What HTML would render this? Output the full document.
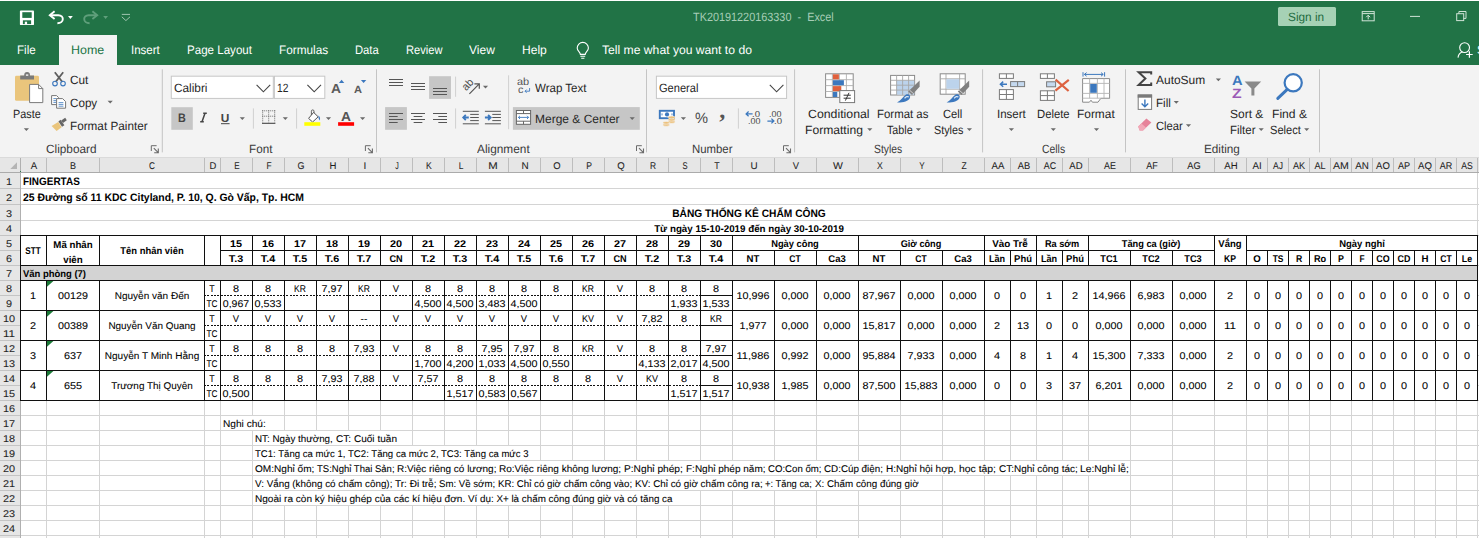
<!DOCTYPE html>
<html lang="vi"><head><meta charset="utf-8"><title>TK20191220163330 - Excel</title><style>
html,body{margin:0;padding:0;background:#fff;}
#app{position:relative;width:1479px;height:538px;overflow:hidden;background:#fff;font-family:"Liberation Sans", sans-serif;}
#app div,#app span,#app svg{position:absolute;display:block;}
.t{white-space:pre;line-height:16px;height:16px;text-rendering:geometricPrecision;}
</style></head><body><div id="app">
<div style="left:0.00px;top:0.00px;width:1479.00px;height:1.00px;background:#ffffff;"></div>
<div style="left:0.00px;top:1.00px;width:1479.00px;height:63.60px;background:#217346;"></div>
<div style="left:0.00px;top:64.60px;width:1479.00px;height:92.40px;background:#f3f3f3;"></div>
<div style="left:58.80px;top:35.00px;width:58.00px;height:30.00px;background:#f3f3f3;"></div>
<svg style="left:0;top:0" width="1479" height="158" viewBox="0 0 1479 158"><rect x="19.9" y="10.6" width="14.1" height="14.5" rx="0.9" fill="#fff"/><rect x="22.3" y="12.2" width="9.4" height="5.7" fill="#217346"/><rect x="22.9" y="20.3" width="8.2" height="3.8" fill="#217346"/><rect x="24.8" y="21.7" width="2.3" height="2.6" fill="#fff"/><path d="M54.6 11.3L49.8 15.2L54.6 19.1" fill="none" stroke="#fff" stroke-width="1.9"/><path d="M50.4 15.2H58.4C61.4 15.2 62.8 17.2 62.8 19C62.8 21.4 60.6 23.2 57.4 23.2" fill="none" stroke="#fff" stroke-width="1.9"/><path d="M68.00 16.00h4.8l-2.40 3.0z" fill="#fff"/><path d="M92.4 11.3L97.2 15.2L92.4 19.1" fill="none" stroke="#5f9f7b" stroke-width="1.9"/><path d="M96.6 15.2H88.6C85.6 15.2 84.2 17.2 84.2 19C84.2 21.4 86.4 23.2 89.6 23.2" fill="none" stroke="#5f9f7b" stroke-width="1.9"/><path d="M103.20 16.00h4.8l-2.40 3.0z" fill="#5f9f7b"/><path d="M121.8 14.4H130" stroke="#9fc5af" stroke-width="1"/><path d="M121.8 16.8L125.9 20.6L130 16.8" fill="none" stroke="#9fc5af" stroke-width="1"/><g fill="none" stroke="#fff" stroke-width="1.1"><path d="M580.4 54.4C580.4 52 577.2 51 577.2 48A5.6 5.6 0 0 1 588.4 48C588.4 51 585.2 52 585.2 54.4Z"/><path d="M580.4 56.3H585.2M581.2 58.2H584.4"/></g><g fill="none" stroke="#cfe3d6" stroke-width="1"><rect x="1362.2" y="11.6" width="12" height="9.2"/><path d="M1362.2 13.6H1374.2" /><path d="M1368.2 19.4V15.4M1366.2 17.2L1368.2 15.2L1370.2 17.2"/><path d="M1410 16.4H1420"/><rect x="1456.7" y="13.7" width="7" height="6.9"/><path d="M1458.9 13.7V11.5H1466V18.4H1463.7"/></g><g fill="none" stroke="#fff" stroke-width="1.1"><circle cx="1464.6" cy="47.6" r="4.9"/><path d="M1458 57.6C1458.4 54.4 1460 52.6 1462.6 51.8"/><path d="M1469.4 51.2V57.8M1466.1 54.5H1472.7" stroke-width="1.2"/></g><path d="M162.3 69.3V152.4" stroke="#c4c4c4" stroke-width="1"/><path d="M376.5 69.3V152.4" stroke="#c4c4c4" stroke-width="1"/><path d="M646.5 69.3V152.4" stroke="#c4c4c4" stroke-width="1"/><path d="M794.6 69.3V152.4" stroke="#c4c4c4" stroke-width="1"/><path d="M982.6 69.3V152.4" stroke="#c4c4c4" stroke-width="1"/><path d="M1125.5 69.3V152.4" stroke="#c4c4c4" stroke-width="1"/><path d="M1319.5 69.3V152.4" stroke="#c4c4c4" stroke-width="1"/><path d="M253.4 108.4V128.6" stroke="#d0d0d0" stroke-width="1"/><path d="M296.6 108.4V128.6" stroke="#d0d0d0" stroke-width="1"/><path d="M455.6 76.6V96.8" stroke="#d0d0d0" stroke-width="1"/><path d="M455.6 108.4V128.6" stroke="#d0d0d0" stroke-width="1"/><path d="M508.6 75.3V129.2" stroke="#d0d0d0" stroke-width="1"/><path d="M738.4 108.4V128.6" stroke="#d0d0d0" stroke-width="1"/><path d="M151.3 151.0V145.7H156.60000000000002" fill="none" stroke="#6a6a6a" stroke-width="1"/><path d="M153.8 148.2L158.0 152.39999999999998M158.3 148.6V152.7H154.20000000000002" fill="none" stroke="#6a6a6a" stroke-width="1.1"/><path d="M365.4 151.0V145.7H370.7" fill="none" stroke="#6a6a6a" stroke-width="1"/><path d="M367.9 148.2L372.09999999999997 152.39999999999998M372.4 148.6V152.7H368.29999999999995" fill="none" stroke="#6a6a6a" stroke-width="1.1"/><path d="M636.5 151.0V145.7H641.8" fill="none" stroke="#6a6a6a" stroke-width="1"/><path d="M639 148.2L643.2 152.39999999999998M643.5 148.6V152.7H639.4" fill="none" stroke="#6a6a6a" stroke-width="1.1"/><path d="M783.5 151.0V145.7H788.8" fill="none" stroke="#6a6a6a" stroke-width="1"/><path d="M786 148.2L790.2 152.39999999999998M790.5 148.6V152.7H786.4" fill="none" stroke="#6a6a6a" stroke-width="1.1"/><rect x="15" y="75.8" width="24" height="25" rx="1.4" fill="#eac57c"/><path d="M20.2 75.6H24.2V75A2.9 2.9 0 0 1 30 75V75.6H34V79.6H20.2Z" fill="#7a7a7a"/><rect x="25.9" y="74.4" width="2.4" height="1.4" fill="#f3f3f3"/><path d="M29.6 84.4H38.6L42.8 88.6V102.6H29.6Z" fill="#fff" stroke="#7a7a7a" stroke-width="1"/><path d="M38.6 84.4V88.6H42.8" fill="none" stroke="#7a7a7a" stroke-width="1"/><path d="M23.80 128.20h5.2l-2.60 2.8z" fill="#6a6a6a"/><path d="M54.8 72.2L62.4 82M63.2 72.2L55.6 82" stroke="#5e5e5e" stroke-width="1.8" fill="none"/><circle cx="55" cy="83.6" r="2.3" fill="none" stroke="#3c78be" stroke-width="1.1"/><circle cx="63" cy="83.6" r="2.3" fill="none" stroke="#3c78be" stroke-width="1.1"/><path d="M51.6 95.6H56.6L58.6 97.6V104.6H51.6Z" fill="#fff" stroke="#777" stroke-width="1"/><path d="M53.4 98.6H56.6M53.4 100.6H56.6M53.4 102.4H56.6" stroke="#3c78be" stroke-width="0.8"/><path d="M56.6 98.6H62.6L65.6 101.6V108.2H56.6Z" fill="#fff" stroke="#777" stroke-width="1"/><path d="M58.6 102.6H63.4M58.6 104.4H63.4M58.6 106.2H63.4" stroke="#3c78be" stroke-width="0.8"/><path d="M107.60 100.80h5.2l-2.60 2.8z" fill="#6a6a6a"/><path d="M51.6 126L58.2 122L61.6 127.2L56.6 131Z" fill="#eac57c"/><path d="M58.4 121.4L60.6 119.8L64.4 125.2L62 126.8Z" fill="#666"/><path d="M61.2 120.4L65.2 117.8L66.8 120.2L63 123Z" fill="#666"/><rect x="171.3" y="76.2" width="102" height="22.2" fill="#fff" stroke="#c6c6c6" stroke-width="1"/><rect x="274.4" y="76.2" width="50.4" height="22.2" fill="#fff" stroke="#c6c6c6" stroke-width="1"/><path d="M256.6 84.8L263.4 91.8L270.2 84.8" fill="none" stroke="#444" stroke-width="1.1"/><path d="M307.4 84.8L314.2 91.8L321 84.8" fill="none" stroke="#444" stroke-width="1.1"/><path d="M338.9 83L341.6 79.8L344.3 83Z" fill="#3c78be"/><path d="M360.9 79.9H366.3L363.6 83.1Z" fill="#3c78be"/><rect x="171.3" y="107.2" width="21.5" height="22.6" fill="#c6c6c6"/><path d="M203.2 113.2H206.8M200.2 121.8H203.8M205 113.2L202 121.8" stroke="#444" stroke-width="1.5" fill="none"/><path d="M221 123.7H229.6" stroke="#444" stroke-width="1"/><path d="M239.70 117.20h5.2l-2.60 2.8z" fill="#6a6a6a"/><g stroke="#6e6e6e" stroke-width="1" stroke-dasharray="1 1" fill="none"><path d="M262.2 110.8H275.2M262.2 116.2H275.2M262.7 110.3V122.6M268.7 110.3V122.6M274.7 110.3V122.6"/></g><path d="M262 123.3H275.4" stroke="#444" stroke-width="1.1"/><path d="M282.70 117.20h5.2l-2.60 2.8z" fill="#6a6a6a"/><path d="M308.6 118.4L313.6 112.4L318.2 116.8L312.6 122Z" fill="#fff" stroke="#555" stroke-width="1"/><path d="M311.4 115V111.2A1.3 1.3 0 0 1 314 111.2V113" fill="none" stroke="#555" stroke-width="0.9"/><path d="M318.4 115.4C320 116.4 320.6 118.4 319.6 120.4C318.8 119.2 318.4 117.6 318.4 115.4Z" fill="#3c78be"/><rect x="304.3" y="122.2" width="16" height="3.6" fill="#ffff00"/><path d="M325.90 117.20h5.2l-2.60 2.8z" fill="#6a6a6a"/><rect x="338.1" y="122.2" width="16" height="3.6" fill="#ff0000"/><path d="M360.00 117.20h5.2l-2.60 2.8z" fill="#6a6a6a"/><rect x="429.1" y="76.2" width="21.9" height="22.7" fill="#c6c6c6"/><rect x="385.1" y="107.1" width="21.8" height="22.7" fill="#c6c6c6"/><path d="M389.00 79.5H403.00M389.00 82.5H403.00M389.00 85.5H403.00" stroke="#555" stroke-width="1" fill="none"/><path d="M411.00 83.5H425.00M411.00 86.5H425.00M411.00 89.5H425.00" stroke="#555" stroke-width="1" fill="none"/><path d="M433.00 88.5H447.00M433.00 91.5H447.00M433.00 94.5H447.00" stroke="#555" stroke-width="1" fill="none"/><path d="M389.00 113.5H403.00M389.00 116.5H397.68M389.00 119.5H403.00M389.00 122.5H397.68" stroke="#555" stroke-width="1" fill="none"/><path d="M411.00 113.5H425.00M413.66 116.5H422.34M411.00 119.5H425.00M413.66 122.5H422.34" stroke="#555" stroke-width="1" fill="none"/><path d="M433.00 113.5H447.00M438.32 116.5H447.00M433.00 119.5H447.00M438.32 122.5H447.00" stroke="#555" stroke-width="1" fill="none"/><path d="M469.4 93.8L479 84.2M474.4 83.9L479.3 83.9L479.3 88.8" stroke="#555" stroke-width="1.2" fill="none"/><path d="M482.90 85.80h5.2l-2.60 2.8z" fill="#6a6a6a"/><path d="M462.8 111.3H478.8M470.2 114.4H478.8M470.2 117.5H478.8M470.2 120.6H478.8M462.8 123.8H478.8" stroke="#555" stroke-width="1" fill="none"/><path d="M463.40000000000003 117.5H468.8M465.8 114.8L463.2 117.5L465.8 120.2" stroke="#3c78be" stroke-width="1.8" fill="none"/><path d="M484.9 111.3H500.9M492.3 114.4H500.9M492.3 117.5H500.9M492.3 120.6H500.9M484.9 123.8H500.9" stroke="#555" stroke-width="1" fill="none"/><path d="M484.9 117.5H490.5M488.09999999999997 115L490.7 117.5L488.09999999999997 120" stroke="#3c78be" stroke-width="1.8" fill="none"/><path d="M529.6 88V91.2H525M526.6 89.6L525 91.2L526.6 92.8" stroke="#3c78be" stroke-width="0.9" fill="none"/><rect x="512.9" y="107.1" width="126.9" height="22.7" fill="#c6c6c6"/><rect x="516.4" y="110.5" width="14.2" height="13.8" fill="#fff" stroke="#666" stroke-width="1"/><path d="M516.4 113.6H530.6M516.4 121.2H530.6M523.5 110.5V113.6M523.5 121.2V124.3" stroke="#666" stroke-width="1"/><path d="M518.4 117.4H528.6M520 115.8L518.4 117.4L520 119M527 115.8L528.6 117.4L527 119" stroke="#3c78be" stroke-width="0.9" fill="none"/><path d="M629.60 117.20h5.2l-2.60 2.8z" fill="#6a6a6a"/><rect x="656.4" y="76.2" width="130.2" height="22.2" fill="#fff" stroke="#c6c6c6" stroke-width="1"/><path d="M769.8 84.8L776.5999999999999 91.8L783.4 84.8" fill="none" stroke="#444" stroke-width="1.1"/><rect x="659.8" y="110.8" width="14.2" height="7.4" fill="#fff" stroke="#3c78be" stroke-width="1.9"/><circle cx="667" cy="114.4" r="2.1" fill="#3c78be"/><path d="M662 113.4V115.4M672 113.4V115.4" stroke="#3c78be" stroke-width="0.9"/><g fill="#ecc07a" stroke="#f3f3f3" stroke-width="0.6"><ellipse cx="671.6" cy="121.9" rx="3.5" ry="1.4"/><ellipse cx="671.6" cy="119.7" rx="3.5" ry="1.4"/><ellipse cx="671.6" cy="117.5" rx="3.5" ry="1.4"/><ellipse cx="666.2" cy="124.9" rx="3.3" ry="1.3"/><ellipse cx="666.2" cy="122.8" rx="3.3" ry="1.3"/></g><path d="M680.80 117.20h5.2l-2.60 2.8z" fill="#6a6a6a"/><path d="M746 113.9H752.6M748.6 111.5L746.1 113.9L748.6 116.3" stroke="#3c78be" stroke-width="1.25" fill="none"/><path d="M767.4 121H774M771.4 118.6L773.9 121L771.4 123.4" stroke="#3c78be" stroke-width="1.25" fill="none"/><rect x="825.6" y="73.8" width="27.6" height="23.6" fill="#fff" stroke="#8a8a8a" stroke-width="1"/><path d="M825.6 79.7H853.2M825.6 85.6H853.2M825.6 91.5H853.2M832.4 73.8V97.4M839.4 73.8V97.4M846.4 73.8V97.4" stroke="#b0b0b0" stroke-width="0.9"/><rect x="832.9" y="74.3" width="6" height="5" fill="#e0603c"/><rect x="832.9" y="80.2" width="11" height="5" fill="#3c78be"/><rect x="832.9" y="86.1" width="8.4" height="5" fill="#e0603c"/><rect x="832.9" y="92" width="4.4" height="5" fill="#3c78be"/><rect x="839.8" y="90.6" width="14.8" height="12" fill="#fff" stroke="#777" stroke-width="1"/><path d="M843.6 95.2H850.8M843.6 98.2H850.8M849 92.8L845.4 100.6" stroke="#333" stroke-width="1" fill="none"/><path d="M867.20 128.20h5.2l-2.60 2.8z" fill="#6a6a6a"/><rect x="890.6" y="75.4" width="24" height="19.6" fill="#fff" stroke="#8a8a8a" stroke-width="1"/><rect x="896.6" y="80.4" width="17.6" height="14.2" fill="#bcd3ec"/><path d="M890.6 80.3H914.6M890.6 85.2H914.6M890.6 90.1H914.6M896.6 75.4V95M902.6 75.4V95M908.6 75.4V95" stroke="#a8a8a8" stroke-width="0.9"/><path d="M908.2 91.6L919.6 80.4V86.8L912 95Z" fill="#808080"/><path d="M909.6 90.2L913.4 93.6" stroke="#f3f3f3" stroke-width="0.7"/><path d="M897 102.6C901 100.8 902.6 97.2 906 94.6C908.6 93.4 910.8 95.2 910 97.8C908.6 101.4 902.6 102.8 897 102.6Z" fill="#3c78be"/><path d="M904.6 98.4C905.8 96.6 907.6 96 908.8 97.2" stroke="#dce8f5" stroke-width="1.2" fill="none"/><path d="M915.80 128.20h5.2l-2.60 2.8z" fill="#6a6a6a"/><rect x="940.2" y="73.8" width="25" height="20.4" fill="#fff" stroke="#8a8a8a" stroke-width="1"/><path d="M940.2 78.8H965.2M940.2 89.2H965.2M946 73.8V94.2M959.6 73.8V94.2" stroke="#a8a8a8" stroke-width="0.9"/><rect x="946.4" y="79.2" width="12.8" height="9.6" fill="#bcd3ec"/><path d="M957.8 91.6L969.2 80.4V86.8L961.6 95Z" fill="#808080"/><path d="M959.2 90.2L963 93.6" stroke="#f3f3f3" stroke-width="0.7"/><path d="M946.6 102.6C950.6 100.8 952.2 97.2 955.6 94.6C958.2 93.4 960.4 95.2 959.6 97.8C958.2 101.4 952.2 102.8 946.6 102.6Z" fill="#3c78be"/><path d="M954.2 98.4C955.4 96.6 957.2 96 958.4 97.2" stroke="#dce8f5" stroke-width="1.2" fill="none"/><path d="M966.80 128.20h5.2l-2.60 2.8z" fill="#6a6a6a"/><g fill="#fff" stroke="#7a7a7a" stroke-width="1"><rect x="999.4" y="73.8" width="14" height="4.6"/><path d="M1006.4 73.8V78.4"/><rect x="999.4" y="89.6" width="14" height="9.8"/><path d="M1006.4 89.6V99.4M999.4 94.5H1013.4"/></g><rect x="1010.6" y="81.6" width="14" height="5" fill="#c5d9ef" stroke="#7a7a7a" stroke-width="1"/><path d="M1017.6 81.6V86.6" stroke="#7a7a7a" stroke-width="1"/><path d="M1000.4 84.2H1007M1003.2 81.6L1000.4 84.2L1003.2 86.8" stroke="#3c78be" stroke-width="1.5" fill="none"/><path d="M1008.80 128.20h5.2l-2.60 2.8z" fill="#6a6a6a"/><g fill="#fff" stroke="#7a7a7a" stroke-width="1"><rect x="1040.4" y="73.8" width="14" height="4.6"/><path d="M1047.4 73.8V78.4"/><rect x="1040.4" y="90.8" width="14" height="9.6"/><path d="M1047.4 90.8V100.4M1040.4 95.6H1054.4"/></g><rect x="1046.6" y="81.8" width="9" height="5" fill="#c5d9ef" stroke="#7a7a7a" stroke-width="1"/><path d="M1055.6 79.6L1068.6 91M1068.8 79.8L1055.4 90.6" stroke="#dd6240" stroke-width="2.2" fill="none"/><path d="M1050.70 128.20h5.2l-2.60 2.8z" fill="#6a6a6a"/><path d="M1083 72.2V76.6M1104.6 72.2V76.6M1084.4 74.4H1103.2M1086.6 72.6L1084.4 74.4L1086.6 76.2M1101 72.6L1103.2 74.4L1101 76.2" stroke="#3c78be" stroke-width="1" fill="none"/><path d="M1082.6 78.6H1109.6V98.4H1100.8L1098 102.2H1092.4L1091 100.2L1089.4 102.2H1082.6Z" fill="#fff" stroke="#8a8a8a" stroke-width="1"/><path d="M1082.6 83.4H1109.6M1082.6 93.4H1109.6M1082.6 98.2H1109.6M1089.6 78.6V98.2M1097.4 78.6V98.2M1104 78.6V98.2" stroke="#b4b4b4" stroke-width="0.9"/><rect x="1090.2" y="84" width="6.6" height="8.8" fill="#3c78be"/><path d="M1093.90 128.20h5.2l-2.60 2.8z" fill="#6a6a6a"/><path d="M1151.2 74.6V72.2H1138.6L1145.4 78.6L1138.6 85H1151.2V82.6" fill="none" stroke="#444" stroke-width="2"/><path d="M1215.80 78.40h5.2l-2.60 2.8z" fill="#6a6a6a"/><rect x="1138.2" y="95" width="13.4" height="14.4" fill="#fff" stroke="#7a7a7a" stroke-width="1"/><rect x="1137.7" y="94.5" width="14.4" height="3.2" fill="#7a7a7a"/><path d="M1144.9 99.6V106.6M1141.6 103.6L1144.9 106.8L1148.2 103.6" stroke="#3c78be" stroke-width="1.4" fill="none"/><path d="M1173.70 101.00h5.2l-2.60 2.8z" fill="#6a6a6a"/><path d="M1138.2 126.4L1146.4 118.4L1151.4 122.4L1143 130.6L1139.6 130.6Z" fill="#e6839a"/><path d="M1138.2 126.4L1141.4 123.4L1146 127.6L1143 130.6L1139.6 130.6Z" fill="#f2a9b8"/><path d="M1185.90 124.20h5.2l-2.60 2.8z" fill="#6a6a6a"/><path d="M1244.6 81.4H1261.2L1254.4 88.6V95.4L1251.4 95.4V88.6Z" fill="#8a8a8a"/><path d="M1258.60 128.20h5.2l-2.60 2.8z" fill="#6a6a6a"/><circle cx="1293.2" cy="82.8" r="8.6" fill="#fff" stroke="#3c78be" stroke-width="2.2"/><path d="M1287 89.6L1277.8 98.4" stroke="#3c78be" stroke-width="3" stroke-linecap="round"/><path d="M1304.10 128.20h5.2l-2.60 2.8z" fill="#6a6a6a"/></svg>
<span id="t0" class="t" style="transform:scaleX(0.9051);transform-origin:0 50%;left:692.80px;top:9.34px;font-size:12px;color:#a8ceb7;">TK20191220163330  -  Excel</span>
<div style="left:1278.00px;top:7.40px;width:58.00px;height:18.20px;background:#a6d1b5;border-radius:1.5px;"></div>
<span id="t1" class="t" style="transform:scaleX(0.9863);transform-origin:0 50%;left:1288.40px;top:8.74px;font-size:12px;color:#1e6b41;">Sign in</span>
<span id="t2" class="t" style="transform:scaleX(0.9431);transform-origin:0 50%;left:17.30px;top:41.84px;font-size:12.3px;color:#ffffff;">File</span>
<span id="t3" class="t" style="transform:scaleX(1.0118);transform-origin:0 50%;left:70.70px;top:41.84px;font-size:12.3px;color:#217346;">Home</span>
<span id="t4" class="t" style="transform:scaleX(0.9361);transform-origin:0 50%;left:130.60px;top:41.84px;font-size:12.3px;color:#ffffff;">Insert</span>
<span id="t5" class="t" style="transform:scaleX(0.9412);transform-origin:0 50%;left:186.70px;top:41.84px;font-size:12.3px;color:#ffffff;">Page Layout</span>
<span id="t6" class="t" style="transform:scaleX(0.9580);transform-origin:0 50%;left:278.60px;top:41.84px;font-size:12.3px;color:#ffffff;">Formulas</span>
<span id="t7" class="t" style="transform:scaleX(0.9121);transform-origin:0 50%;left:354.70px;top:41.84px;font-size:12.3px;color:#ffffff;">Data</span>
<span id="t8" class="t" style="transform:scaleX(0.9026);transform-origin:0 50%;left:406.10px;top:41.84px;font-size:12.3px;color:#ffffff;">Review</span>
<span id="t9" class="t" style="transform:scaleX(0.9759);transform-origin:0 50%;left:469.30px;top:41.84px;font-size:12.3px;color:#ffffff;">View</span>
<span id="t10" class="t" style="transform:scaleX(0.9804);transform-origin:0 50%;left:521.70px;top:41.84px;font-size:12.3px;color:#ffffff;">Help</span>
<span id="t11" class="t" style="transform:scaleX(0.9878);transform-origin:0 50%;left:601.80px;top:41.84px;font-size:12.3px;color:#ffffff;">Tell me what you want to do</span>
<span id="t12" class="t" style="transform:scaleX(0.9742);transform-origin:0 50%;left:1476.60px;top:41.84px;font-size:12.3px;color:#ffffff;">S</span>
<span id="t13" class="t" style="transform:scaleX(0.9830);transform-origin:0 50%;left:45.80px;top:140.54px;font-size:12px;color:#3a3a3a;">Clipboard</span>
<span id="t14" class="t" style="transform:scaleX(0.9744);transform-origin:0 50%;left:249.00px;top:140.54px;font-size:12px;color:#3a3a3a;">Font</span>
<span id="t15" class="t" style="transform:scaleX(0.9874);transform-origin:0 50%;left:476.70px;top:140.54px;font-size:12px;color:#3a3a3a;">Alignment</span>
<span id="t16" class="t" style="transform:scaleX(0.9488);transform-origin:0 50%;left:692.20px;top:140.54px;font-size:12px;color:#3a3a3a;">Number</span>
<span id="t17" class="t" style="transform:scaleX(0.8597);transform-origin:0 50%;left:874.10px;top:140.54px;font-size:12px;color:#3a3a3a;">Styles</span>
<span id="t18" class="t" style="transform:scaleX(0.8661);transform-origin:0 50%;left:1042.20px;top:140.54px;font-size:12px;color:#3a3a3a;">Cells</span>
<span id="t19" class="t" style="transform:scaleX(0.9781);transform-origin:0 50%;left:1204.10px;top:140.54px;font-size:12px;color:#3a3a3a;">Editing</span>
<span id="t20" class="t" style="transform:scaleX(0.9026);transform-origin:0 50%;left:13.10px;top:105.84px;font-size:12px;color:#262626;">Paste</span>
<span id="t21" class="t" style="transform:scaleX(0.9846);transform-origin:0 50%;left:70.10px;top:71.74px;font-size:12px;color:#262626;">Cut</span>
<span id="t22" class="t" style="transform:scaleX(0.9709);transform-origin:0 50%;left:70.10px;top:94.84px;font-size:12px;color:#262626;">Copy</span>
<span id="t23" class="t" style="transform:scaleX(0.9778);transform-origin:0 50%;left:70.10px;top:117.64px;font-size:12px;color:#262626;">Format Painter</span>
<span id="t24" class="t" style="transform:scaleX(0.9848);transform-origin:0 50%;left:174.00px;top:79.94px;font-size:12px;color:#262626;">Calibri</span>
<span id="t25" class="t" style="transform:scaleX(0.8533);transform-origin:0 50%;left:277.40px;top:79.94px;font-size:12px;color:#262626;">12</span>
<span id="t26" class="t" style="transform:scaleX(1.0649);transform-origin:0 50%;left:330.80px;top:80.55px;font-size:13px;color:#5a5a5a;font-weight:bold;">A</span>
<span id="t27" class="t" style="transform:scaleX(1.0535);transform-origin:0 50%;left:353.60px;top:81.52px;font-size:10.5px;color:#5a5a5a;font-weight:bold;">A</span>
<span id="t28" class="t" style="transform:translateX(-50%) scaleX(0.8712);transform-origin:50% 50%;left:181.60px;top:109.54px;font-size:12.4px;color:#444;font-weight:bold;">B</span>
<span id="t29" class="t" style="transform:translateX(-50%) scaleX(1.0081);transform-origin:50% 50%;left:225.30px;top:109.74px;font-size:11.8px;color:#444;font-weight:bold;">U</span>
<span id="t30" class="t" style="transform:translateX(-50%) scaleX(1.0649);transform-origin:50% 50%;left:346.00px;top:108.95px;font-size:13px;color:#555;font-weight:bold;">A</span>
<span id="torient" class="t" style="left:468.3px;top:76.6px;font-size:11px;color:#4a4a4a;transform:translateX(-50%) rotate(-47deg) scaleX(0.95);transform-origin:50% 50%;">ab</span>
<span id="t32" class="t" style="transform:scaleX(1.0551);transform-origin:0 50%;left:517.10px;top:74.92px;font-size:10.4px;color:#555;">ab</span>
<span id="t33" class="t" style="transform:scaleX(1.0378);transform-origin:0 50%;left:517.60px;top:82.72px;font-size:10.4px;color:#555;">c</span>
<span id="t34" class="t" style="transform:scaleX(0.9612);transform-origin:0 50%;left:535.10px;top:79.94px;font-size:12px;color:#262626;">Wrap Text</span>
<span id="t35" class="t" style="transform:scaleX(0.9988);transform-origin:0 50%;left:535.10px;top:110.74px;font-size:12px;color:#262626;">Merge &amp; Center</span>
<span id="t36" class="t" style="transform:scaleX(0.9226);transform-origin:0 50%;left:659.10px;top:79.94px;font-size:12px;color:#262626;">General</span>
<span id="t37" class="t" style="transform:scaleX(0.9742);transform-origin:0 50%;left:694.60px;top:110.77px;font-size:15px;color:#4a4a4a;">%</span>
<span id="tcomma" class="t" style="left:719.2px;top:103.3px;font-size:24px;font-weight:bold;color:#555;font-family:'Liberation Serif',serif;">,</span>
<span id="t39" class="t" style="transform:scaleX(1.1155);transform-origin:0 50%;left:752.00px;top:105.90px;font-size:8.6px;color:#444;">.0</span>
<span id="t40" class="t" style="transform:scaleX(1.0374);transform-origin:0 50%;left:747.60px;top:112.90px;font-size:8.6px;color:#444;">.00</span>
<span id="t41" class="t" style="transform:scaleX(1.0374);transform-origin:0 50%;left:769.20px;top:105.90px;font-size:8.6px;color:#444;">.00</span>
<span id="t42" class="t" style="transform:scaleX(1.1155);transform-origin:0 50%;left:773.80px;top:112.90px;font-size:8.6px;color:#444;">.0</span>
<span id="t43" class="t" style="transform:scaleX(1.0259);transform-origin:0 50%;left:807.70px;top:105.84px;font-size:12px;color:#262626;">Conditional</span>
<span id="t44" class="t" style="transform:scaleX(1.0094);transform-origin:0 50%;left:805.00px;top:121.64px;font-size:12px;color:#262626;">Formatting</span>
<span id="t45" class="t" style="transform:scaleX(0.9516);transform-origin:0 50%;left:877.20px;top:105.84px;font-size:12px;color:#262626;">Format as</span>
<span id="t46" class="t" style="transform:scaleX(0.8924);transform-origin:0 50%;left:887.20px;top:121.64px;font-size:12px;color:#262626;">Table</span>
<span id="t47" class="t" style="transform:scaleX(0.9336);transform-origin:0 50%;left:943.00px;top:105.84px;font-size:12px;color:#262626;">Cell</span>
<span id="t48" class="t" style="transform:scaleX(0.8994);transform-origin:0 50%;left:933.80px;top:121.64px;font-size:12px;color:#262626;">Styles</span>
<span id="t49" class="t" style="transform:scaleX(0.9595);transform-origin:0 50%;left:996.60px;top:105.84px;font-size:12px;color:#262626;">Insert</span>
<span id="t50" class="t" style="transform:scaleX(0.9398);transform-origin:0 50%;left:1036.90px;top:105.84px;font-size:12px;color:#262626;">Delete</span>
<span id="t51" class="t" style="transform:scaleX(0.9917);transform-origin:0 50%;left:1077.00px;top:105.84px;font-size:12px;color:#262626;">Format</span>
<span id="t52" class="t" style="transform:scaleX(0.9968);transform-origin:0 50%;left:1155.80px;top:71.74px;font-size:12px;color:#262626;">AutoSum</span>
<span id="t53" class="t" style="transform:scaleX(0.9655);transform-origin:0 50%;left:1155.80px;top:94.84px;font-size:12px;color:#262626;">Fill</span>
<span id="t54" class="t" style="transform:scaleX(0.9342);transform-origin:0 50%;left:1155.80px;top:117.64px;font-size:12px;color:#262626;">Clear</span>
<span id="t55" class="t" style="transform:scaleX(1.0872);transform-origin:0 50%;left:1231.80px;top:72.56px;font-size:13.5px;color:#3c78be;font-weight:bold;">A</span>
<span id="t56" class="t" style="transform:scaleX(1.1636);transform-origin:0 50%;left:1232.40px;top:85.76px;font-size:13.5px;color:#9b59b6;font-weight:bold;">Z</span>
<span id="t57" class="t" style="transform:scaleX(0.9982);transform-origin:0 50%;left:1230.00px;top:105.84px;font-size:12px;color:#262626;">Sort &amp;</span>
<span id="t58" class="t" style="transform:scaleX(0.9561);transform-origin:0 50%;left:1230.00px;top:121.64px;font-size:12px;color:#262626;">Filter</span>
<span id="t59" class="t" style="transform:scaleX(1.0090);transform-origin:0 50%;left:1272.00px;top:105.84px;font-size:12px;color:#262626;">Find &amp;</span>
<span id="t60" class="t" style="transform:scaleX(0.9233);transform-origin:0 50%;left:1269.70px;top:121.64px;font-size:12px;color:#262626;">Select</span>
<div style="left:0.00px;top:156.80px;width:1479.00px;height:381.20px;background:#fff;"></div>
<div style="left:0.00px;top:157.20px;width:1479.00px;height:15.20px;background:#e6e6e6;"></div>
<div style="left:0.00px;top:157.20px;width:20.40px;height:380.80px;background:#e6e6e6;"></div>
<div style="left:0.00px;top:156.70px;width:1479.00px;height:0.80px;background:#dadada;"></div>
<div style="left:20.40px;top:187.80px;width:1458.60px;height:1.00px;background:#d4d4d4;"></div>
<div style="left:20.40px;top:203.70px;width:1458.60px;height:1.00px;background:#d4d4d4;"></div>
<div style="left:20.40px;top:219.60px;width:1458.60px;height:1.00px;background:#d4d4d4;"></div>
<div style="left:20.40px;top:234.70px;width:1458.60px;height:1.00px;background:#d4d4d4;"></div>
<div style="left:20.40px;top:249.70px;width:1458.60px;height:1.00px;background:#d4d4d4;"></div>
<div style="left:20.40px;top:264.70px;width:1458.60px;height:1.00px;background:#d4d4d4;"></div>
<div style="left:20.40px;top:279.70px;width:1458.60px;height:1.00px;background:#d4d4d4;"></div>
<div style="left:20.40px;top:294.70px;width:1458.60px;height:1.00px;background:#d4d4d4;"></div>
<div style="left:20.40px;top:309.70px;width:1458.60px;height:1.00px;background:#d4d4d4;"></div>
<div style="left:20.40px;top:324.70px;width:1458.60px;height:1.00px;background:#d4d4d4;"></div>
<div style="left:20.40px;top:339.70px;width:1458.60px;height:1.00px;background:#d4d4d4;"></div>
<div style="left:20.40px;top:354.70px;width:1458.60px;height:1.00px;background:#d4d4d4;"></div>
<div style="left:20.40px;top:369.70px;width:1458.60px;height:1.00px;background:#d4d4d4;"></div>
<div style="left:20.40px;top:384.70px;width:1458.60px;height:1.00px;background:#d4d4d4;"></div>
<div style="left:20.40px;top:399.70px;width:1458.60px;height:1.00px;background:#d4d4d4;"></div>
<div style="left:20.40px;top:414.70px;width:1458.60px;height:1.00px;background:#d4d4d4;"></div>
<div style="left:20.40px;top:429.70px;width:1458.60px;height:1.00px;background:#d4d4d4;"></div>
<div style="left:20.40px;top:444.70px;width:1458.60px;height:1.00px;background:#d4d4d4;"></div>
<div style="left:20.40px;top:459.70px;width:1458.60px;height:1.00px;background:#d4d4d4;"></div>
<div style="left:20.40px;top:474.70px;width:1458.60px;height:1.00px;background:#d4d4d4;"></div>
<div style="left:20.40px;top:489.70px;width:1458.60px;height:1.00px;background:#d4d4d4;"></div>
<div style="left:20.40px;top:504.70px;width:1458.60px;height:1.00px;background:#d4d4d4;"></div>
<div style="left:20.40px;top:519.70px;width:1458.60px;height:1.00px;background:#d4d4d4;"></div>
<div style="left:20.40px;top:534.70px;width:1458.60px;height:1.00px;background:#d4d4d4;"></div>
<div style="left:20.40px;top:549.70px;width:1458.60px;height:1.00px;background:#d4d4d4;"></div>
<div style="left:46.00px;top:235.20px;width:1.00px;height:302.80px;background:#d4d4d4;"></div>
<div style="left:99.00px;top:235.20px;width:1.00px;height:302.80px;background:#d4d4d4;"></div>
<div style="left:203.80px;top:235.20px;width:1.00px;height:302.80px;background:#d4d4d4;"></div>
<div style="left:220.00px;top:235.20px;width:1.00px;height:302.80px;background:#d4d4d4;"></div>
<div style="left:252.00px;top:235.20px;width:1.00px;height:302.80px;background:#d4d4d4;"></div>
<div style="left:284.00px;top:235.20px;width:1.00px;height:302.80px;background:#d4d4d4;"></div>
<div style="left:316.00px;top:235.20px;width:1.00px;height:302.80px;background:#d4d4d4;"></div>
<div style="left:348.00px;top:235.20px;width:1.00px;height:302.80px;background:#d4d4d4;"></div>
<div style="left:380.00px;top:235.20px;width:1.00px;height:302.80px;background:#d4d4d4;"></div>
<div style="left:412.00px;top:235.20px;width:1.00px;height:302.80px;background:#d4d4d4;"></div>
<div style="left:444.00px;top:235.20px;width:1.00px;height:302.80px;background:#d4d4d4;"></div>
<div style="left:476.00px;top:235.20px;width:1.00px;height:302.80px;background:#d4d4d4;"></div>
<div style="left:508.00px;top:235.20px;width:1.00px;height:302.80px;background:#d4d4d4;"></div>
<div style="left:540.00px;top:235.20px;width:1.00px;height:302.80px;background:#d4d4d4;"></div>
<div style="left:572.00px;top:235.20px;width:1.00px;height:302.80px;background:#d4d4d4;"></div>
<div style="left:604.00px;top:235.20px;width:1.00px;height:302.80px;background:#d4d4d4;"></div>
<div style="left:636.00px;top:235.20px;width:1.00px;height:302.80px;background:#d4d4d4;"></div>
<div style="left:668.00px;top:235.20px;width:1.00px;height:302.80px;background:#d4d4d4;"></div>
<div style="left:700.00px;top:235.20px;width:1.00px;height:302.80px;background:#d4d4d4;"></div>
<div style="left:732.00px;top:235.20px;width:1.00px;height:302.80px;background:#d4d4d4;"></div>
<div style="left:774.00px;top:235.20px;width:1.00px;height:302.80px;background:#d4d4d4;"></div>
<div style="left:816.00px;top:235.20px;width:1.00px;height:302.80px;background:#d4d4d4;"></div>
<div style="left:858.00px;top:235.20px;width:1.00px;height:302.80px;background:#d4d4d4;"></div>
<div style="left:900.00px;top:235.20px;width:1.00px;height:302.80px;background:#d4d4d4;"></div>
<div style="left:942.00px;top:235.20px;width:1.00px;height:302.80px;background:#d4d4d4;"></div>
<div style="left:984.00px;top:235.20px;width:1.00px;height:302.80px;background:#d4d4d4;"></div>
<div style="left:1010.00px;top:235.20px;width:1.00px;height:302.80px;background:#d4d4d4;"></div>
<div style="left:1036.00px;top:235.20px;width:1.00px;height:302.80px;background:#d4d4d4;"></div>
<div style="left:1062.00px;top:235.20px;width:1.00px;height:302.80px;background:#d4d4d4;"></div>
<div style="left:1088.00px;top:235.20px;width:1.00px;height:302.80px;background:#d4d4d4;"></div>
<div style="left:1130.00px;top:235.20px;width:1.00px;height:302.80px;background:#d4d4d4;"></div>
<div style="left:1172.00px;top:235.20px;width:1.00px;height:302.80px;background:#d4d4d4;"></div>
<div style="left:1214.00px;top:235.20px;width:1.00px;height:302.80px;background:#d4d4d4;"></div>
<div style="left:1246.00px;top:235.20px;width:1.00px;height:302.80px;background:#d4d4d4;"></div>
<div style="left:1267.00px;top:235.20px;width:1.00px;height:302.80px;background:#d4d4d4;"></div>
<div style="left:1288.00px;top:235.20px;width:1.00px;height:302.80px;background:#d4d4d4;"></div>
<div style="left:1309.00px;top:235.20px;width:1.00px;height:302.80px;background:#d4d4d4;"></div>
<div style="left:1330.00px;top:235.20px;width:1.00px;height:302.80px;background:#d4d4d4;"></div>
<div style="left:1351.00px;top:235.20px;width:1.00px;height:302.80px;background:#d4d4d4;"></div>
<div style="left:1372.00px;top:235.20px;width:1.00px;height:302.80px;background:#d4d4d4;"></div>
<div style="left:1393.00px;top:235.20px;width:1.00px;height:302.80px;background:#d4d4d4;"></div>
<div style="left:1414.00px;top:235.20px;width:1.00px;height:302.80px;background:#d4d4d4;"></div>
<div style="left:1435.00px;top:235.20px;width:1.00px;height:302.80px;background:#d4d4d4;"></div>
<div style="left:1456.00px;top:235.20px;width:1.00px;height:302.80px;background:#d4d4d4;"></div>
<div style="left:1477.00px;top:235.20px;width:1.00px;height:302.80px;background:#d4d4d4;"></div>
<div style="left:1477.00px;top:172.40px;width:1.00px;height:62.80px;background:#d4d4d4;"></div>
<div style="left:46.00px;top:158.20px;width:1.00px;height:14.20px;background:#bdbdbd;"></div>
<div style="left:99.00px;top:158.20px;width:1.00px;height:14.20px;background:#bdbdbd;"></div>
<div style="left:203.80px;top:158.20px;width:1.00px;height:14.20px;background:#bdbdbd;"></div>
<div style="left:220.00px;top:158.20px;width:1.00px;height:14.20px;background:#bdbdbd;"></div>
<div style="left:252.00px;top:158.20px;width:1.00px;height:14.20px;background:#bdbdbd;"></div>
<div style="left:284.00px;top:158.20px;width:1.00px;height:14.20px;background:#bdbdbd;"></div>
<div style="left:316.00px;top:158.20px;width:1.00px;height:14.20px;background:#bdbdbd;"></div>
<div style="left:348.00px;top:158.20px;width:1.00px;height:14.20px;background:#bdbdbd;"></div>
<div style="left:380.00px;top:158.20px;width:1.00px;height:14.20px;background:#bdbdbd;"></div>
<div style="left:412.00px;top:158.20px;width:1.00px;height:14.20px;background:#bdbdbd;"></div>
<div style="left:444.00px;top:158.20px;width:1.00px;height:14.20px;background:#bdbdbd;"></div>
<div style="left:476.00px;top:158.20px;width:1.00px;height:14.20px;background:#bdbdbd;"></div>
<div style="left:508.00px;top:158.20px;width:1.00px;height:14.20px;background:#bdbdbd;"></div>
<div style="left:540.00px;top:158.20px;width:1.00px;height:14.20px;background:#bdbdbd;"></div>
<div style="left:572.00px;top:158.20px;width:1.00px;height:14.20px;background:#bdbdbd;"></div>
<div style="left:604.00px;top:158.20px;width:1.00px;height:14.20px;background:#bdbdbd;"></div>
<div style="left:636.00px;top:158.20px;width:1.00px;height:14.20px;background:#bdbdbd;"></div>
<div style="left:668.00px;top:158.20px;width:1.00px;height:14.20px;background:#bdbdbd;"></div>
<div style="left:700.00px;top:158.20px;width:1.00px;height:14.20px;background:#bdbdbd;"></div>
<div style="left:732.00px;top:158.20px;width:1.00px;height:14.20px;background:#bdbdbd;"></div>
<div style="left:774.00px;top:158.20px;width:1.00px;height:14.20px;background:#bdbdbd;"></div>
<div style="left:816.00px;top:158.20px;width:1.00px;height:14.20px;background:#bdbdbd;"></div>
<div style="left:858.00px;top:158.20px;width:1.00px;height:14.20px;background:#bdbdbd;"></div>
<div style="left:900.00px;top:158.20px;width:1.00px;height:14.20px;background:#bdbdbd;"></div>
<div style="left:942.00px;top:158.20px;width:1.00px;height:14.20px;background:#bdbdbd;"></div>
<div style="left:984.00px;top:158.20px;width:1.00px;height:14.20px;background:#bdbdbd;"></div>
<div style="left:1010.00px;top:158.20px;width:1.00px;height:14.20px;background:#bdbdbd;"></div>
<div style="left:1036.00px;top:158.20px;width:1.00px;height:14.20px;background:#bdbdbd;"></div>
<div style="left:1062.00px;top:158.20px;width:1.00px;height:14.20px;background:#bdbdbd;"></div>
<div style="left:1088.00px;top:158.20px;width:1.00px;height:14.20px;background:#bdbdbd;"></div>
<div style="left:1130.00px;top:158.20px;width:1.00px;height:14.20px;background:#bdbdbd;"></div>
<div style="left:1172.00px;top:158.20px;width:1.00px;height:14.20px;background:#bdbdbd;"></div>
<div style="left:1214.00px;top:158.20px;width:1.00px;height:14.20px;background:#bdbdbd;"></div>
<div style="left:1246.00px;top:158.20px;width:1.00px;height:14.20px;background:#bdbdbd;"></div>
<div style="left:1267.00px;top:158.20px;width:1.00px;height:14.20px;background:#bdbdbd;"></div>
<div style="left:1288.00px;top:158.20px;width:1.00px;height:14.20px;background:#bdbdbd;"></div>
<div style="left:1309.00px;top:158.20px;width:1.00px;height:14.20px;background:#bdbdbd;"></div>
<div style="left:1330.00px;top:158.20px;width:1.00px;height:14.20px;background:#bdbdbd;"></div>
<div style="left:1351.00px;top:158.20px;width:1.00px;height:14.20px;background:#bdbdbd;"></div>
<div style="left:1372.00px;top:158.20px;width:1.00px;height:14.20px;background:#bdbdbd;"></div>
<div style="left:1393.00px;top:158.20px;width:1.00px;height:14.20px;background:#bdbdbd;"></div>
<div style="left:1414.00px;top:158.20px;width:1.00px;height:14.20px;background:#bdbdbd;"></div>
<div style="left:1435.00px;top:158.20px;width:1.00px;height:14.20px;background:#bdbdbd;"></div>
<div style="left:1456.00px;top:158.20px;width:1.00px;height:14.20px;background:#bdbdbd;"></div>
<div style="left:1477.00px;top:158.20px;width:1.00px;height:14.20px;background:#bdbdbd;"></div>
<div style="left:19.90px;top:158.20px;width:1.00px;height:379.80px;background:#b0b0b0;"></div>
<div style="left:0.00px;top:171.80px;width:1479.00px;height:1.20px;background:#ababab;"></div>
<div style="left:0.00px;top:187.80px;width:20.40px;height:1.00px;background:#c4c4c4;"></div>
<div style="left:0.00px;top:203.70px;width:20.40px;height:1.00px;background:#c4c4c4;"></div>
<div style="left:0.00px;top:219.60px;width:20.40px;height:1.00px;background:#c4c4c4;"></div>
<div style="left:0.00px;top:234.70px;width:20.40px;height:1.00px;background:#c4c4c4;"></div>
<div style="left:0.00px;top:249.70px;width:20.40px;height:1.00px;background:#c4c4c4;"></div>
<div style="left:0.00px;top:264.70px;width:20.40px;height:1.00px;background:#c4c4c4;"></div>
<div style="left:0.00px;top:279.70px;width:20.40px;height:1.00px;background:#c4c4c4;"></div>
<div style="left:0.00px;top:294.70px;width:20.40px;height:1.00px;background:#c4c4c4;"></div>
<div style="left:0.00px;top:309.70px;width:20.40px;height:1.00px;background:#c4c4c4;"></div>
<div style="left:0.00px;top:324.70px;width:20.40px;height:1.00px;background:#c4c4c4;"></div>
<div style="left:0.00px;top:339.70px;width:20.40px;height:1.00px;background:#c4c4c4;"></div>
<div style="left:0.00px;top:354.70px;width:20.40px;height:1.00px;background:#c4c4c4;"></div>
<div style="left:0.00px;top:369.70px;width:20.40px;height:1.00px;background:#c4c4c4;"></div>
<div style="left:0.00px;top:384.70px;width:20.40px;height:1.00px;background:#c4c4c4;"></div>
<div style="left:0.00px;top:399.70px;width:20.40px;height:1.00px;background:#c4c4c4;"></div>
<div style="left:0.00px;top:414.70px;width:20.40px;height:1.00px;background:#c4c4c4;"></div>
<div style="left:0.00px;top:429.70px;width:20.40px;height:1.00px;background:#c4c4c4;"></div>
<div style="left:0.00px;top:444.70px;width:20.40px;height:1.00px;background:#c4c4c4;"></div>
<div style="left:0.00px;top:459.70px;width:20.40px;height:1.00px;background:#c4c4c4;"></div>
<div style="left:0.00px;top:474.70px;width:20.40px;height:1.00px;background:#c4c4c4;"></div>
<div style="left:0.00px;top:489.70px;width:20.40px;height:1.00px;background:#c4c4c4;"></div>
<div style="left:0.00px;top:504.70px;width:20.40px;height:1.00px;background:#c4c4c4;"></div>
<div style="left:0.00px;top:519.70px;width:20.40px;height:1.00px;background:#c4c4c4;"></div>
<div style="left:0.00px;top:534.70px;width:20.40px;height:1.00px;background:#c4c4c4;"></div>
<div style="left:0.00px;top:549.70px;width:20.40px;height:1.00px;background:#c4c4c4;"></div>
<svg style="left:9px;top:161px" width="10" height="10" viewBox="0 0 10 10"><path d="M8 1.3V8H1.3Z" fill="#b4b4b4"/></svg>
<div style="left:19.50px;top:171.40px;width:1.00px;height:1.00px;background:#2a7a4c;"></div>
<span id="t61" class="t" style="transform:translateX(-50%) scaleX(0.9817);transform-origin:50% 50%;left:33.85px;top:158.81px;font-size:9.8px;color:#1f1f1f;-webkit-text-stroke:0.07px;">A</span>
<span id="t62" class="t" style="transform:translateX(-50%) scaleX(0.9223);transform-origin:50% 50%;left:73.40px;top:158.81px;font-size:9.8px;color:#1f1f1f;-webkit-text-stroke:0.07px;">B</span>
<span id="t63" class="t" style="transform:translateX(-50%) scaleX(0.8359);transform-origin:50% 50%;left:152.30px;top:158.81px;font-size:9.8px;color:#1f1f1f;-webkit-text-stroke:0.07px;">C</span>
<span id="t64" class="t" style="transform:translateX(-50%) scaleX(0.9645);transform-origin:50% 50%;left:212.80px;top:158.81px;font-size:9.8px;color:#1f1f1f;-webkit-text-stroke:0.07px;">D</span>
<span id="t65" class="t" style="transform:translateX(-50%) scaleX(0.8274);transform-origin:50% 50%;left:236.90px;top:158.81px;font-size:9.8px;color:#1f1f1f;-webkit-text-stroke:0.07px;">E</span>
<span id="t66" class="t" style="transform:translateX(-50%) scaleX(0.8514);transform-origin:50% 50%;left:268.90px;top:158.81px;font-size:9.8px;color:#1f1f1f;-webkit-text-stroke:0.07px;">F</span>
<span id="t67" class="t" style="transform:translateX(-50%) scaleX(0.9186);transform-origin:50% 50%;left:300.90px;top:158.81px;font-size:9.8px;color:#1f1f1f;-webkit-text-stroke:0.07px;">G</span>
<span id="t68" class="t" style="transform:translateX(-50%) scaleX(0.9770);transform-origin:50% 50%;left:332.90px;top:158.81px;font-size:9.8px;color:#1f1f1f;-webkit-text-stroke:0.07px;">H</span>
<span id="t69" class="t" style="transform:translateX(-50%) scaleX(1.0230);transform-origin:50% 50%;left:364.90px;top:158.81px;font-size:9.8px;color:#1f1f1f;-webkit-text-stroke:0.07px;">I</span>
<span id="t70" class="t" style="transform:translateX(-50%) scaleX(0.7217);transform-origin:50% 50%;left:396.90px;top:158.81px;font-size:9.8px;color:#1f1f1f;-webkit-text-stroke:0.07px;">J</span>
<span id="t71" class="t" style="transform:translateX(-50%) scaleX(0.8816);transform-origin:50% 50%;left:428.90px;top:158.81px;font-size:9.8px;color:#1f1f1f;-webkit-text-stroke:0.07px;">K</span>
<span id="t72" class="t" style="transform:translateX(-50%) scaleX(0.8549);transform-origin:50% 50%;left:460.90px;top:158.81px;font-size:9.8px;color:#1f1f1f;-webkit-text-stroke:0.07px;">L</span>
<span id="t73" class="t" style="transform:translateX(-50%) scaleX(1.1614);transform-origin:50% 50%;left:492.90px;top:158.81px;font-size:9.8px;color:#1f1f1f;-webkit-text-stroke:0.07px;">M</span>
<span id="t74" class="t" style="transform:translateX(-50%) scaleX(1.0131);transform-origin:50% 50%;left:524.90px;top:158.81px;font-size:9.8px;color:#1f1f1f;-webkit-text-stroke:0.07px;">N</span>
<span id="t75" class="t" style="transform:translateX(-50%) scaleX(0.9637);transform-origin:50% 50%;left:556.90px;top:158.81px;font-size:9.8px;color:#1f1f1f;-webkit-text-stroke:0.07px;">O</span>
<span id="t76" class="t" style="transform:translateX(-50%) scaleX(0.8766);transform-origin:50% 50%;left:588.90px;top:158.81px;font-size:9.8px;color:#1f1f1f;-webkit-text-stroke:0.07px;">P</span>
<span id="t77" class="t" style="transform:translateX(-50%) scaleX(0.9797);transform-origin:50% 50%;left:620.90px;top:158.81px;font-size:9.8px;color:#1f1f1f;-webkit-text-stroke:0.07px;">Q</span>
<span id="t78" class="t" style="transform:translateX(-50%) scaleX(0.8515);transform-origin:50% 50%;left:652.90px;top:158.81px;font-size:9.8px;color:#1f1f1f;-webkit-text-stroke:0.07px;">R</span>
<span id="t79" class="t" style="transform:translateX(-50%) scaleX(0.7782);transform-origin:50% 50%;left:684.90px;top:158.81px;font-size:9.8px;color:#1f1f1f;-webkit-text-stroke:0.07px;">S</span>
<span id="t80" class="t" style="transform:translateX(-50%) scaleX(0.9033);transform-origin:50% 50%;left:716.90px;top:158.81px;font-size:9.8px;color:#1f1f1f;-webkit-text-stroke:0.07px;">T</span>
<span id="t81" class="t" style="transform:translateX(-50%) scaleX(1.0068);transform-origin:50% 50%;left:753.90px;top:158.81px;font-size:9.8px;color:#1f1f1f;-webkit-text-stroke:0.07px;">U</span>
<span id="t82" class="t" style="transform:translateX(-50%) scaleX(0.9613);transform-origin:50% 50%;left:795.90px;top:158.81px;font-size:9.8px;color:#1f1f1f;-webkit-text-stroke:0.07px;">V</span>
<span id="t83" class="t" style="transform:translateX(-50%) scaleX(1.0680);transform-origin:50% 50%;left:837.90px;top:158.81px;font-size:9.8px;color:#1f1f1f;-webkit-text-stroke:0.07px;">W</span>
<span id="t84" class="t" style="transform:translateX(-50%) scaleX(0.8799);transform-origin:50% 50%;left:879.90px;top:158.81px;font-size:9.8px;color:#1f1f1f;-webkit-text-stroke:0.07px;">X</span>
<span id="t85" class="t" style="transform:translateX(-50%) scaleX(0.8257);transform-origin:50% 50%;left:921.90px;top:158.81px;font-size:9.8px;color:#1f1f1f;-webkit-text-stroke:0.07px;">Y</span>
<span id="t86" class="t" style="transform:translateX(-50%) scaleX(0.8681);transform-origin:50% 50%;left:963.90px;top:158.81px;font-size:9.8px;color:#1f1f1f;-webkit-text-stroke:0.07px;">Z</span>
<span id="t87" class="t" style="transform:translateX(-50%) scaleX(0.9828);transform-origin:50% 50%;left:997.90px;top:158.81px;font-size:9.8px;color:#1f1f1f;-webkit-text-stroke:0.07px;">AA</span>
<span id="t88" class="t" style="transform:translateX(-50%) scaleX(0.9531);transform-origin:50% 50%;left:1023.90px;top:158.81px;font-size:9.8px;color:#1f1f1f;-webkit-text-stroke:0.07px;">AB</span>
<span id="t89" class="t" style="transform:translateX(-50%) scaleX(0.9059);transform-origin:50% 50%;left:1049.90px;top:158.81px;font-size:9.8px;color:#1f1f1f;-webkit-text-stroke:0.07px;">AC</span>
<span id="t90" class="t" style="transform:translateX(-50%) scaleX(0.9727);transform-origin:50% 50%;left:1075.90px;top:158.81px;font-size:9.8px;color:#1f1f1f;-webkit-text-stroke:0.07px;">AD</span>
<span id="t91" class="t" style="transform:translateX(-50%) scaleX(0.9056);transform-origin:50% 50%;left:1109.90px;top:158.81px;font-size:9.8px;color:#1f1f1f;-webkit-text-stroke:0.07px;">AE</span>
<span id="t92" class="t" style="transform:translateX(-50%) scaleX(0.9194);transform-origin:50% 50%;left:1151.90px;top:158.81px;font-size:9.8px;color:#1f1f1f;-webkit-text-stroke:0.07px;">AF</span>
<span id="t93" class="t" style="transform:translateX(-50%) scaleX(0.9488);transform-origin:50% 50%;left:1193.90px;top:158.81px;font-size:9.8px;color:#1f1f1f;-webkit-text-stroke:0.07px;">AG</span>
<span id="t94" class="t" style="transform:translateX(-50%) scaleX(0.9792);transform-origin:50% 50%;left:1230.90px;top:158.81px;font-size:9.8px;color:#1f1f1f;-webkit-text-stroke:0.07px;">AH</span>
<span id="t95" class="t" style="transform:translateX(-50%) scaleX(0.9955);transform-origin:50% 50%;left:1257.40px;top:158.81px;font-size:9.8px;color:#1f1f1f;-webkit-text-stroke:0.07px;">AI</span>
<span id="t96" class="t" style="transform:translateX(-50%) scaleX(0.8715);transform-origin:50% 50%;left:1278.40px;top:158.81px;font-size:9.8px;color:#1f1f1f;-webkit-text-stroke:0.07px;">AJ</span>
<span id="t97" class="t" style="transform:translateX(-50%) scaleX(0.9328);transform-origin:50% 50%;left:1299.40px;top:158.81px;font-size:9.8px;color:#1f1f1f;-webkit-text-stroke:0.07px;">AK</span>
<span id="t98" class="t" style="transform:translateX(-50%) scaleX(0.9253);transform-origin:50% 50%;left:1320.40px;top:158.81px;font-size:9.8px;color:#1f1f1f;-webkit-text-stroke:0.07px;">AL</span>
<span id="t99" class="t" style="transform:translateX(-50%) scaleX(1.0826);transform-origin:50% 50%;left:1341.40px;top:158.81px;font-size:9.8px;color:#1f1f1f;-webkit-text-stroke:0.07px;">AM</span>
<span id="t100" class="t" style="transform:translateX(-50%) scaleX(0.9980);transform-origin:50% 50%;left:1362.40px;top:158.81px;font-size:9.8px;color:#1f1f1f;-webkit-text-stroke:0.07px;">AN</span>
<span id="t101" class="t" style="transform:translateX(-50%) scaleX(0.9731);transform-origin:50% 50%;left:1383.40px;top:158.81px;font-size:9.8px;color:#1f1f1f;-webkit-text-stroke:0.07px;">AO</span>
<span id="t102" class="t" style="transform:translateX(-50%) scaleX(0.9302);transform-origin:50% 50%;left:1404.40px;top:158.81px;font-size:9.8px;color:#1f1f1f;-webkit-text-stroke:0.07px;">AP</span>
<span id="t103" class="t" style="transform:translateX(-50%) scaleX(0.9817);transform-origin:50% 50%;left:1425.40px;top:158.81px;font-size:9.8px;color:#1f1f1f;-webkit-text-stroke:0.07px;">AQ</span>
<span id="t104" class="t" style="transform:translateX(-50%) scaleX(0.9141);transform-origin:50% 50%;left:1446.40px;top:158.81px;font-size:9.8px;color:#1f1f1f;-webkit-text-stroke:0.07px;">AR</span>
<span id="t105" class="t" style="transform:translateX(-50%) scaleX(0.8810);transform-origin:50% 50%;left:1467.40px;top:158.81px;font-size:9.8px;color:#1f1f1f;-webkit-text-stroke:0.07px;">AS</span>
<span id="t106" class="t" style="transform:translateX(-50%) scaleX(1.1095);transform-origin:50% 50%;left:8.80px;top:174.96px;font-size:9.8px;color:#1f1f1f;-webkit-text-stroke:0.07px;">1</span>
<span id="t107" class="t" style="transform:translateX(-50%) scaleX(1.1095);transform-origin:50% 50%;left:8.80px;top:190.86px;font-size:9.8px;color:#1f1f1f;-webkit-text-stroke:0.07px;">2</span>
<span id="t108" class="t" style="transform:translateX(-50%) scaleX(1.1095);transform-origin:50% 50%;left:8.80px;top:206.76px;font-size:9.8px;color:#1f1f1f;-webkit-text-stroke:0.07px;">3</span>
<span id="t109" class="t" style="transform:translateX(-50%) scaleX(1.1095);transform-origin:50% 50%;left:8.80px;top:222.31px;font-size:9.8px;color:#1f1f1f;-webkit-text-stroke:0.07px;">4</span>
<span id="t110" class="t" style="transform:translateX(-50%) scaleX(1.1095);transform-origin:50% 50%;left:8.80px;top:237.31px;font-size:9.8px;color:#1f1f1f;-webkit-text-stroke:0.07px;">5</span>
<span id="t111" class="t" style="transform:translateX(-50%) scaleX(1.1095);transform-origin:50% 50%;left:8.80px;top:252.31px;font-size:9.8px;color:#1f1f1f;-webkit-text-stroke:0.07px;">6</span>
<span id="t112" class="t" style="transform:translateX(-50%) scaleX(1.1095);transform-origin:50% 50%;left:8.80px;top:267.31px;font-size:9.8px;color:#1f1f1f;-webkit-text-stroke:0.07px;">7</span>
<span id="t113" class="t" style="transform:translateX(-50%) scaleX(1.1095);transform-origin:50% 50%;left:8.80px;top:282.31px;font-size:9.8px;color:#1f1f1f;-webkit-text-stroke:0.07px;">8</span>
<span id="t114" class="t" style="transform:translateX(-50%) scaleX(1.1095);transform-origin:50% 50%;left:8.80px;top:297.31px;font-size:9.8px;color:#1f1f1f;-webkit-text-stroke:0.07px;">9</span>
<span id="t115" class="t" style="transform:translateX(-50%) scaleX(1.1095);transform-origin:50% 50%;left:8.80px;top:312.31px;font-size:9.8px;color:#1f1f1f;-webkit-text-stroke:0.07px;">10</span>
<span id="t116" class="t" style="transform:translateX(-50%) scaleX(1.1896);transform-origin:50% 50%;left:8.80px;top:327.31px;font-size:9.8px;color:#1f1f1f;-webkit-text-stroke:0.07px;">11</span>
<span id="t117" class="t" style="transform:translateX(-50%) scaleX(1.1095);transform-origin:50% 50%;left:8.80px;top:342.31px;font-size:9.8px;color:#1f1f1f;-webkit-text-stroke:0.07px;">12</span>
<span id="t118" class="t" style="transform:translateX(-50%) scaleX(1.1095);transform-origin:50% 50%;left:8.80px;top:357.31px;font-size:9.8px;color:#1f1f1f;-webkit-text-stroke:0.07px;">13</span>
<span id="t119" class="t" style="transform:translateX(-50%) scaleX(1.1095);transform-origin:50% 50%;left:8.80px;top:372.31px;font-size:9.8px;color:#1f1f1f;-webkit-text-stroke:0.07px;">14</span>
<span id="t120" class="t" style="transform:translateX(-50%) scaleX(1.1095);transform-origin:50% 50%;left:8.80px;top:387.31px;font-size:9.8px;color:#1f1f1f;-webkit-text-stroke:0.07px;">15</span>
<span id="t121" class="t" style="transform:translateX(-50%) scaleX(1.1095);transform-origin:50% 50%;left:8.80px;top:402.31px;font-size:9.8px;color:#1f1f1f;-webkit-text-stroke:0.07px;">16</span>
<span id="t122" class="t" style="transform:translateX(-50%) scaleX(1.1095);transform-origin:50% 50%;left:8.80px;top:417.31px;font-size:9.8px;color:#1f1f1f;-webkit-text-stroke:0.07px;">17</span>
<span id="t123" class="t" style="transform:translateX(-50%) scaleX(1.1095);transform-origin:50% 50%;left:8.80px;top:432.31px;font-size:9.8px;color:#1f1f1f;-webkit-text-stroke:0.07px;">18</span>
<span id="t124" class="t" style="transform:translateX(-50%) scaleX(1.1095);transform-origin:50% 50%;left:8.80px;top:447.31px;font-size:9.8px;color:#1f1f1f;-webkit-text-stroke:0.07px;">19</span>
<span id="t125" class="t" style="transform:translateX(-50%) scaleX(1.1095);transform-origin:50% 50%;left:8.80px;top:462.31px;font-size:9.8px;color:#1f1f1f;-webkit-text-stroke:0.07px;">20</span>
<span id="t126" class="t" style="transform:translateX(-50%) scaleX(1.1095);transform-origin:50% 50%;left:8.80px;top:477.31px;font-size:9.8px;color:#1f1f1f;-webkit-text-stroke:0.07px;">21</span>
<span id="t127" class="t" style="transform:translateX(-50%) scaleX(1.1095);transform-origin:50% 50%;left:8.80px;top:492.31px;font-size:9.8px;color:#1f1f1f;-webkit-text-stroke:0.07px;">22</span>
<span id="t128" class="t" style="transform:translateX(-50%) scaleX(1.1095);transform-origin:50% 50%;left:8.80px;top:507.31px;font-size:9.8px;color:#1f1f1f;-webkit-text-stroke:0.07px;">23</span>
<span id="t129" class="t" style="transform:translateX(-50%) scaleX(1.1095);transform-origin:50% 50%;left:8.80px;top:522.31px;font-size:9.8px;color:#1f1f1f;-webkit-text-stroke:0.07px;">24</span>
<div style="left:20.40px;top:235.20px;width:1457.10px;height:165.00px;background:#fff;"></div>
<span id="t130" class="t" style="transform:scaleX(0.9143);transform-origin:0 50%;left:23.10px;top:174.28px;font-size:10.9px;color:#000;font-weight:bold;-webkit-text-stroke:0.03px;">FINGERTAS</span>
<span id="t131" class="t" style="transform:scaleX(0.9564);transform-origin:0 50%;left:23.10px;top:190.18px;font-size:10.9px;color:#000;font-weight:bold;-webkit-text-stroke:0.03px;">25 Đường số 11 KDC Cityland, P. 10, Q. Gò Vấp, Tp. HCM</span>
<span id="t132" class="t" style="transform:translateX(-50%) scaleX(0.9362);transform-origin:50% 50%;left:749.20px;top:206.18px;font-size:10.9px;color:#000;font-weight:bold;-webkit-text-stroke:0.03px;">BẢNG THỐNG KÊ CHẤM CÔNG</span>
<span id="t133" class="t" style="transform:translateX(-50%) scaleX(0.9980);transform-origin:50% 50%;left:748.80px;top:222.46px;font-size:9.8px;color:#000;font-weight:bold;-webkit-text-stroke:0.03px;">Từ ngày 15-10-2019 đến ngày 30-10-2019</span>
<div style="left:20.40px;top:265.20px;width:1457.10px;height:15.00px;background:#d3d3d3;"></div>
<span id="t134" class="t" style="transform:scaleX(0.9646);transform-origin:0 50%;left:23.40px;top:266.66px;font-size:9.8px;color:#000;font-weight:bold;-webkit-text-stroke:0.03px;">Văn phòng (7)</span>
<span id="t135" class="t" style="transform:translateX(-50%) scaleX(0.8263);transform-origin:50% 50%;left:33.05px;top:244.16px;font-size:9.8px;color:#000;font-weight:bold;-webkit-text-stroke:0.03px;">STT</span>
<span id="t136" class="t" style="transform:translateX(-50%) scaleX(0.9891);transform-origin:50% 50%;left:72.60px;top:237.71px;font-size:9.8px;color:#000;font-weight:bold;-webkit-text-stroke:0.03px;">Mã nhân</span>
<span id="t137" class="t" style="transform:translateX(-50%) scaleX(0.9957);transform-origin:50% 50%;left:72.60px;top:253.21px;font-size:9.8px;color:#000;font-weight:bold;-webkit-text-stroke:0.03px;">viên</span>
<span id="t138" class="t" style="transform:translateX(-50%) scaleX(0.9609);transform-origin:50% 50%;left:151.50px;top:244.16px;font-size:9.8px;color:#000;font-weight:bold;-webkit-text-stroke:0.03px;">Tên nhân viên</span>
<span id="t139" class="t" style="transform:translateX(-50%) scaleX(1.1095);transform-origin:50% 50%;left:236.10px;top:236.66px;font-size:9.8px;color:#000;font-weight:bold;-webkit-text-stroke:0.03px;">15</span>
<span id="t140" class="t" style="transform:translateX(-50%) scaleX(1.0966);transform-origin:50% 50%;left:236.10px;top:251.66px;font-size:9.8px;color:#000;font-weight:bold;-webkit-text-stroke:0.03px;">T.3</span>
<span id="t141" class="t" style="transform:translateX(-50%) scaleX(1.1095);transform-origin:50% 50%;left:268.10px;top:236.66px;font-size:9.8px;color:#000;font-weight:bold;-webkit-text-stroke:0.03px;">16</span>
<span id="t142" class="t" style="transform:translateX(-50%) scaleX(1.0966);transform-origin:50% 50%;left:268.10px;top:251.66px;font-size:9.8px;color:#000;font-weight:bold;-webkit-text-stroke:0.03px;">T.4</span>
<span id="t143" class="t" style="transform:translateX(-50%) scaleX(1.1095);transform-origin:50% 50%;left:300.10px;top:236.66px;font-size:9.8px;color:#000;font-weight:bold;-webkit-text-stroke:0.03px;">17</span>
<span id="t144" class="t" style="transform:translateX(-50%) scaleX(1.0966);transform-origin:50% 50%;left:300.10px;top:251.66px;font-size:9.8px;color:#000;font-weight:bold;-webkit-text-stroke:0.03px;">T.5</span>
<span id="t145" class="t" style="transform:translateX(-50%) scaleX(1.1095);transform-origin:50% 50%;left:332.10px;top:236.66px;font-size:9.8px;color:#000;font-weight:bold;-webkit-text-stroke:0.03px;">18</span>
<span id="t146" class="t" style="transform:translateX(-50%) scaleX(1.0966);transform-origin:50% 50%;left:332.10px;top:251.66px;font-size:9.8px;color:#000;font-weight:bold;-webkit-text-stroke:0.03px;">T.6</span>
<span id="t147" class="t" style="transform:translateX(-50%) scaleX(1.1095);transform-origin:50% 50%;left:364.10px;top:236.66px;font-size:9.8px;color:#000;font-weight:bold;-webkit-text-stroke:0.03px;">19</span>
<span id="t148" class="t" style="transform:translateX(-50%) scaleX(1.0966);transform-origin:50% 50%;left:364.10px;top:251.66px;font-size:9.8px;color:#000;font-weight:bold;-webkit-text-stroke:0.03px;">T.7</span>
<span id="t149" class="t" style="transform:translateX(-50%) scaleX(1.1095);transform-origin:50% 50%;left:396.10px;top:236.66px;font-size:9.8px;color:#000;font-weight:bold;-webkit-text-stroke:0.03px;">20</span>
<span id="t150" class="t" style="transform:translateX(-50%) scaleX(0.9315);transform-origin:50% 50%;left:396.10px;top:251.66px;font-size:9.8px;color:#000;font-weight:bold;-webkit-text-stroke:0.03px;">CN</span>
<span id="t151" class="t" style="transform:translateX(-50%) scaleX(1.1095);transform-origin:50% 50%;left:428.10px;top:236.66px;font-size:9.8px;color:#000;font-weight:bold;-webkit-text-stroke:0.03px;">21</span>
<span id="t152" class="t" style="transform:translateX(-50%) scaleX(1.0966);transform-origin:50% 50%;left:428.10px;top:251.66px;font-size:9.8px;color:#000;font-weight:bold;-webkit-text-stroke:0.03px;">T.2</span>
<span id="t153" class="t" style="transform:translateX(-50%) scaleX(1.1095);transform-origin:50% 50%;left:460.10px;top:236.66px;font-size:9.8px;color:#000;font-weight:bold;-webkit-text-stroke:0.03px;">22</span>
<span id="t154" class="t" style="transform:translateX(-50%) scaleX(1.0966);transform-origin:50% 50%;left:460.10px;top:251.66px;font-size:9.8px;color:#000;font-weight:bold;-webkit-text-stroke:0.03px;">T.3</span>
<span id="t155" class="t" style="transform:translateX(-50%) scaleX(1.1095);transform-origin:50% 50%;left:492.10px;top:236.66px;font-size:9.8px;color:#000;font-weight:bold;-webkit-text-stroke:0.03px;">23</span>
<span id="t156" class="t" style="transform:translateX(-50%) scaleX(1.0966);transform-origin:50% 50%;left:492.10px;top:251.66px;font-size:9.8px;color:#000;font-weight:bold;-webkit-text-stroke:0.03px;">T.4</span>
<span id="t157" class="t" style="transform:translateX(-50%) scaleX(1.1095);transform-origin:50% 50%;left:524.10px;top:236.66px;font-size:9.8px;color:#000;font-weight:bold;-webkit-text-stroke:0.03px;">24</span>
<span id="t158" class="t" style="transform:translateX(-50%) scaleX(1.0966);transform-origin:50% 50%;left:524.10px;top:251.66px;font-size:9.8px;color:#000;font-weight:bold;-webkit-text-stroke:0.03px;">T.5</span>
<span id="t159" class="t" style="transform:translateX(-50%) scaleX(1.1095);transform-origin:50% 50%;left:556.10px;top:236.66px;font-size:9.8px;color:#000;font-weight:bold;-webkit-text-stroke:0.03px;">25</span>
<span id="t160" class="t" style="transform:translateX(-50%) scaleX(1.0966);transform-origin:50% 50%;left:556.10px;top:251.66px;font-size:9.8px;color:#000;font-weight:bold;-webkit-text-stroke:0.03px;">T.6</span>
<span id="t161" class="t" style="transform:translateX(-50%) scaleX(1.1095);transform-origin:50% 50%;left:588.10px;top:236.66px;font-size:9.8px;color:#000;font-weight:bold;-webkit-text-stroke:0.03px;">26</span>
<span id="t162" class="t" style="transform:translateX(-50%) scaleX(1.0966);transform-origin:50% 50%;left:588.10px;top:251.66px;font-size:9.8px;color:#000;font-weight:bold;-webkit-text-stroke:0.03px;">T.7</span>
<span id="t163" class="t" style="transform:translateX(-50%) scaleX(1.1095);transform-origin:50% 50%;left:620.10px;top:236.66px;font-size:9.8px;color:#000;font-weight:bold;-webkit-text-stroke:0.03px;">27</span>
<span id="t164" class="t" style="transform:translateX(-50%) scaleX(0.9315);transform-origin:50% 50%;left:620.10px;top:251.66px;font-size:9.8px;color:#000;font-weight:bold;-webkit-text-stroke:0.03px;">CN</span>
<span id="t165" class="t" style="transform:translateX(-50%) scaleX(1.1095);transform-origin:50% 50%;left:652.10px;top:236.66px;font-size:9.8px;color:#000;font-weight:bold;-webkit-text-stroke:0.03px;">28</span>
<span id="t166" class="t" style="transform:translateX(-50%) scaleX(1.0966);transform-origin:50% 50%;left:652.10px;top:251.66px;font-size:9.8px;color:#000;font-weight:bold;-webkit-text-stroke:0.03px;">T.2</span>
<span id="t167" class="t" style="transform:translateX(-50%) scaleX(1.1095);transform-origin:50% 50%;left:684.10px;top:236.66px;font-size:9.8px;color:#000;font-weight:bold;-webkit-text-stroke:0.03px;">29</span>
<span id="t168" class="t" style="transform:translateX(-50%) scaleX(1.0966);transform-origin:50% 50%;left:684.10px;top:251.66px;font-size:9.8px;color:#000;font-weight:bold;-webkit-text-stroke:0.03px;">T.3</span>
<span id="t169" class="t" style="transform:translateX(-50%) scaleX(1.1095);transform-origin:50% 50%;left:716.10px;top:236.66px;font-size:9.8px;color:#000;font-weight:bold;-webkit-text-stroke:0.03px;">30</span>
<span id="t170" class="t" style="transform:translateX(-50%) scaleX(1.0966);transform-origin:50% 50%;left:716.10px;top:251.66px;font-size:9.8px;color:#000;font-weight:bold;-webkit-text-stroke:0.03px;">T.4</span>
<span id="t171" class="t" style="transform:translateX(-50%) scaleX(0.9515);transform-origin:50% 50%;left:795.10px;top:236.66px;font-size:9.8px;color:#000;font-weight:bold;-webkit-text-stroke:0.03px;">Ngày công</span>
<span id="t172" class="t" style="transform:translateX(-50%) scaleX(0.9345);transform-origin:50% 50%;left:921.10px;top:236.66px;font-size:9.8px;color:#000;font-weight:bold;-webkit-text-stroke:0.03px;">Giờ công</span>
<span id="t173" class="t" style="transform:translateX(-50%) scaleX(0.9806);transform-origin:50% 50%;left:753.10px;top:251.66px;font-size:9.8px;color:#000;font-weight:bold;-webkit-text-stroke:0.03px;">NT</span>
<span id="t174" class="t" style="transform:translateX(-50%) scaleX(0.8702);transform-origin:50% 50%;left:795.10px;top:251.66px;font-size:9.8px;color:#000;font-weight:bold;-webkit-text-stroke:0.03px;">CT</span>
<span id="t175" class="t" style="transform:translateX(-50%) scaleX(0.9678);transform-origin:50% 50%;left:837.10px;top:251.66px;font-size:9.8px;color:#000;font-weight:bold;-webkit-text-stroke:0.03px;">Ca3</span>
<span id="t176" class="t" style="transform:translateX(-50%) scaleX(0.9806);transform-origin:50% 50%;left:879.10px;top:251.66px;font-size:9.8px;color:#000;font-weight:bold;-webkit-text-stroke:0.03px;">NT</span>
<span id="t177" class="t" style="transform:translateX(-50%) scaleX(0.8702);transform-origin:50% 50%;left:921.10px;top:251.66px;font-size:9.8px;color:#000;font-weight:bold;-webkit-text-stroke:0.03px;">CT</span>
<span id="t178" class="t" style="transform:translateX(-50%) scaleX(0.9678);transform-origin:50% 50%;left:963.10px;top:251.66px;font-size:9.8px;color:#000;font-weight:bold;-webkit-text-stroke:0.03px;">Ca3</span>
<span id="t179" class="t" style="transform:translateX(-50%) scaleX(1.0038);transform-origin:50% 50%;left:1010.10px;top:236.66px;font-size:9.8px;color:#000;font-weight:bold;-webkit-text-stroke:0.03px;">Vào Trễ</span>
<span id="t180" class="t" style="transform:translateX(-50%) scaleX(0.9387);transform-origin:50% 50%;left:1062.10px;top:236.66px;font-size:9.8px;color:#000;font-weight:bold;-webkit-text-stroke:0.03px;">Ra sớm</span>
<span id="t181" class="t" style="transform:translateX(-50%) scaleX(0.9264);transform-origin:50% 50%;left:997.10px;top:251.66px;font-size:9.8px;color:#000;font-weight:bold;-webkit-text-stroke:0.03px;">Lần</span>
<span id="t182" class="t" style="transform:translateX(-50%) scaleX(0.9628);transform-origin:50% 50%;left:1023.10px;top:251.66px;font-size:9.8px;color:#000;font-weight:bold;-webkit-text-stroke:0.03px;">Phú</span>
<span id="t183" class="t" style="transform:translateX(-50%) scaleX(0.9264);transform-origin:50% 50%;left:1049.10px;top:251.66px;font-size:9.8px;color:#000;font-weight:bold;-webkit-text-stroke:0.03px;">Lần</span>
<span id="t184" class="t" style="transform:translateX(-50%) scaleX(0.9628);transform-origin:50% 50%;left:1075.10px;top:251.66px;font-size:9.8px;color:#000;font-weight:bold;-webkit-text-stroke:0.03px;">Phú</span>
<span id="t185" class="t" style="transform:translateX(-50%) scaleX(0.9444);transform-origin:50% 50%;left:1151.10px;top:236.66px;font-size:9.8px;color:#000;font-weight:bold;-webkit-text-stroke:0.03px;">Tăng ca (giờ)</span>
<span id="t186" class="t" style="transform:translateX(-50%) scaleX(0.9406);transform-origin:50% 50%;left:1109.10px;top:251.66px;font-size:9.8px;color:#000;font-weight:bold;-webkit-text-stroke:0.03px;">TC1</span>
<span id="t187" class="t" style="transform:translateX(-50%) scaleX(0.9406);transform-origin:50% 50%;left:1151.10px;top:251.66px;font-size:9.8px;color:#000;font-weight:bold;-webkit-text-stroke:0.03px;">TC2</span>
<span id="t188" class="t" style="transform:translateX(-50%) scaleX(0.9406);transform-origin:50% 50%;left:1193.10px;top:251.66px;font-size:9.8px;color:#000;font-weight:bold;-webkit-text-stroke:0.03px;">TC3</span>
<span id="t189" class="t" style="transform:translateX(-50%) scaleX(0.9713);transform-origin:50% 50%;left:1230.10px;top:236.66px;font-size:9.8px;color:#000;font-weight:bold;-webkit-text-stroke:0.03px;">Vắng</span>
<span id="t190" class="t" style="transform:translateX(-50%) scaleX(0.8790);transform-origin:50% 50%;left:1230.10px;top:251.66px;font-size:9.8px;color:#000;font-weight:bold;-webkit-text-stroke:0.03px;">KP</span>
<span id="t191" class="t" style="transform:translateX(-50%) scaleX(0.9659);transform-origin:50% 50%;left:1361.60px;top:236.66px;font-size:9.8px;color:#000;font-weight:bold;-webkit-text-stroke:0.03px;">Ngày nghỉ</span>
<span id="t192" class="t" style="transform:translateX(-50%) scaleX(0.9841);transform-origin:50% 50%;left:1256.60px;top:251.66px;font-size:9.8px;color:#000;font-weight:bold;-webkit-text-stroke:0.03px;">O</span>
<span id="t193" class="t" style="transform:translateX(-50%) scaleX(0.8574);transform-origin:50% 50%;left:1277.60px;top:251.66px;font-size:9.8px;color:#000;font-weight:bold;-webkit-text-stroke:0.03px;">TS</span>
<span id="t194" class="t" style="transform:translateX(-50%) scaleX(0.8829);transform-origin:50% 50%;left:1298.60px;top:251.66px;font-size:9.8px;color:#000;font-weight:bold;-webkit-text-stroke:0.03px;">R</span>
<span id="t195" class="t" style="transform:translateX(-50%) scaleX(0.9356);transform-origin:50% 50%;left:1319.60px;top:251.66px;font-size:9.8px;color:#000;font-weight:bold;-webkit-text-stroke:0.03px;">Ro</span>
<span id="t196" class="t" style="transform:translateX(-50%) scaleX(0.9020);transform-origin:50% 50%;left:1340.60px;top:251.66px;font-size:9.8px;color:#000;font-weight:bold;-webkit-text-stroke:0.03px;">P</span>
<span id="t197" class="t" style="transform:translateX(-50%) scaleX(0.8514);transform-origin:50% 50%;left:1361.60px;top:251.66px;font-size:9.8px;color:#000;font-weight:bold;-webkit-text-stroke:0.03px;">F</span>
<span id="t198" class="t" style="transform:translateX(-50%) scaleX(0.9097);transform-origin:50% 50%;left:1382.60px;top:251.66px;font-size:9.8px;color:#000;font-weight:bold;-webkit-text-stroke:0.03px;">CO</span>
<span id="t199" class="t" style="transform:translateX(-50%) scaleX(0.9088);transform-origin:50% 50%;left:1403.60px;top:251.66px;font-size:9.8px;color:#000;font-weight:bold;-webkit-text-stroke:0.03px;">CD</span>
<span id="t200" class="t" style="transform:translateX(-50%) scaleX(0.9895);transform-origin:50% 50%;left:1424.60px;top:251.66px;font-size:9.8px;color:#000;font-weight:bold;-webkit-text-stroke:0.03px;">H</span>
<span id="t201" class="t" style="transform:translateX(-50%) scaleX(0.8702);transform-origin:50% 50%;left:1445.60px;top:251.66px;font-size:9.8px;color:#000;font-weight:bold;-webkit-text-stroke:0.03px;">CT</span>
<span id="t202" class="t" style="transform:translateX(-50%) scaleX(0.8987);transform-origin:50% 50%;left:1466.60px;top:251.66px;font-size:9.8px;color:#000;font-weight:bold;-webkit-text-stroke:0.03px;">Le</span>
<span id="t203" class="t" style="transform:translateX(-50%) scaleX(1.1095);transform-origin:50% 50%;left:33.05px;top:289.16px;font-size:9.8px;color:#000;-webkit-text-stroke:0.07px;">1</span>
<span id="t204" class="t" style="transform:translateX(-50%) scaleX(1.0972);transform-origin:50% 50%;left:72.60px;top:289.16px;font-size:9.8px;color:#000;-webkit-text-stroke:0.07px;">00129</span>
<span id="t205" class="t" style="transform:translateX(-50%) scaleX(1.0221);transform-origin:50% 50%;left:151.50px;top:289.16px;font-size:9.8px;color:#000;-webkit-text-stroke:0.07px;">Nguyễn văn Đến</span>
<span id="t206" class="t" style="transform:translateX(-50%) scaleX(0.9033);transform-origin:50% 50%;left:212.00px;top:281.66px;font-size:9.8px;color:#000;-webkit-text-stroke:0.07px;">T</span>
<span id="t207" class="t" style="transform:translateX(-50%) scaleX(0.8421);transform-origin:50% 50%;left:212.00px;top:296.66px;font-size:9.8px;color:#000;-webkit-text-stroke:0.07px;">TC</span>
<span id="t208" class="t" style="transform:translateX(-50%) scaleX(1.1095);transform-origin:50% 50%;left:236.10px;top:281.66px;font-size:9.8px;color:#000;-webkit-text-stroke:0.07px;">8</span>
<span id="t209" class="t" style="transform:translateX(-50%) scaleX(1.1095);transform-origin:50% 50%;left:268.10px;top:281.66px;font-size:9.8px;color:#000;-webkit-text-stroke:0.07px;">8</span>
<span id="t210" class="t" style="transform:translateX(-50%) scaleX(0.8660);transform-origin:50% 50%;left:300.10px;top:281.66px;font-size:9.8px;color:#000;-webkit-text-stroke:0.07px;">KR</span>
<span id="t211" class="t" style="transform:translateX(-50%) scaleX(1.0968);transform-origin:50% 50%;left:332.10px;top:281.66px;font-size:9.8px;color:#000;-webkit-text-stroke:0.07px;">7,97</span>
<span id="t212" class="t" style="transform:translateX(-50%) scaleX(0.8660);transform-origin:50% 50%;left:364.10px;top:281.66px;font-size:9.8px;color:#000;-webkit-text-stroke:0.07px;">KR</span>
<span id="t213" class="t" style="transform:translateX(-50%) scaleX(0.9613);transform-origin:50% 50%;left:396.10px;top:281.66px;font-size:9.8px;color:#000;-webkit-text-stroke:0.07px;">V</span>
<span id="t214" class="t" style="transform:translateX(-50%) scaleX(1.1095);transform-origin:50% 50%;left:428.10px;top:281.66px;font-size:9.8px;color:#000;-webkit-text-stroke:0.07px;">8</span>
<span id="t215" class="t" style="transform:translateX(-50%) scaleX(1.1095);transform-origin:50% 50%;left:460.10px;top:281.66px;font-size:9.8px;color:#000;-webkit-text-stroke:0.07px;">8</span>
<span id="t216" class="t" style="transform:translateX(-50%) scaleX(1.1095);transform-origin:50% 50%;left:492.10px;top:281.66px;font-size:9.8px;color:#000;-webkit-text-stroke:0.07px;">8</span>
<span id="t217" class="t" style="transform:translateX(-50%) scaleX(1.1095);transform-origin:50% 50%;left:524.10px;top:281.66px;font-size:9.8px;color:#000;-webkit-text-stroke:0.07px;">8</span>
<span id="t218" class="t" style="transform:translateX(-50%) scaleX(1.1095);transform-origin:50% 50%;left:556.10px;top:281.66px;font-size:9.8px;color:#000;-webkit-text-stroke:0.07px;">8</span>
<span id="t219" class="t" style="transform:translateX(-50%) scaleX(0.8660);transform-origin:50% 50%;left:588.10px;top:281.66px;font-size:9.8px;color:#000;-webkit-text-stroke:0.07px;">KR</span>
<span id="t220" class="t" style="transform:translateX(-50%) scaleX(0.9613);transform-origin:50% 50%;left:620.10px;top:281.66px;font-size:9.8px;color:#000;-webkit-text-stroke:0.07px;">V</span>
<span id="t221" class="t" style="transform:translateX(-50%) scaleX(1.1095);transform-origin:50% 50%;left:652.10px;top:281.66px;font-size:9.8px;color:#000;-webkit-text-stroke:0.07px;">8</span>
<span id="t222" class="t" style="transform:translateX(-50%) scaleX(1.1095);transform-origin:50% 50%;left:684.10px;top:281.66px;font-size:9.8px;color:#000;-webkit-text-stroke:0.07px;">8</span>
<span id="t223" class="t" style="transform:translateX(-50%) scaleX(1.1095);transform-origin:50% 50%;left:716.10px;top:281.66px;font-size:9.8px;color:#000;-webkit-text-stroke:0.07px;">8</span>
<span id="t224" class="t" style="transform:translateX(-50%) scaleX(1.0803);transform-origin:50% 50%;left:236.10px;top:296.66px;font-size:9.8px;color:#000;-webkit-text-stroke:0.07px;">0,967</span>
<span id="t225" class="t" style="transform:translateX(-50%) scaleX(1.0996);transform-origin:50% 50%;left:268.10px;top:296.66px;font-size:9.8px;color:#000;-webkit-text-stroke:0.07px;">0,533</span>
<span id="t226" class="t" style="transform:translateX(-50%) scaleX(1.0996);transform-origin:50% 50%;left:428.10px;top:296.66px;font-size:9.8px;color:#000;-webkit-text-stroke:0.07px;">4,500</span>
<span id="t227" class="t" style="transform:translateX(-50%) scaleX(1.0996);transform-origin:50% 50%;left:460.10px;top:296.66px;font-size:9.8px;color:#000;-webkit-text-stroke:0.07px;">4,500</span>
<span id="t228" class="t" style="transform:translateX(-50%) scaleX(1.0996);transform-origin:50% 50%;left:492.10px;top:296.66px;font-size:9.8px;color:#000;-webkit-text-stroke:0.07px;">3,483</span>
<span id="t229" class="t" style="transform:translateX(-50%) scaleX(1.0996);transform-origin:50% 50%;left:524.10px;top:296.66px;font-size:9.8px;color:#000;-webkit-text-stroke:0.07px;">4,500</span>
<span id="t230" class="t" style="transform:translateX(-50%) scaleX(1.0996);transform-origin:50% 50%;left:684.10px;top:296.66px;font-size:9.8px;color:#000;-webkit-text-stroke:0.07px;">1,933</span>
<span id="t231" class="t" style="transform:translateX(-50%) scaleX(1.0996);transform-origin:50% 50%;left:716.10px;top:296.66px;font-size:9.8px;color:#000;-webkit-text-stroke:0.07px;">1,533</span>
<span id="t232" class="t" style="transform:translateX(-50%) scaleX(1.1020);transform-origin:50% 50%;left:753.10px;top:289.16px;font-size:9.8px;color:#000;-webkit-text-stroke:0.07px;">10,996</span>
<span id="t233" class="t" style="transform:translateX(-50%) scaleX(1.0996);transform-origin:50% 50%;left:795.10px;top:289.16px;font-size:9.8px;color:#000;-webkit-text-stroke:0.07px;">0,000</span>
<span id="t234" class="t" style="transform:translateX(-50%) scaleX(1.0996);transform-origin:50% 50%;left:837.10px;top:289.16px;font-size:9.8px;color:#000;-webkit-text-stroke:0.07px;">0,000</span>
<span id="t235" class="t" style="transform:translateX(-50%) scaleX(1.1020);transform-origin:50% 50%;left:879.10px;top:289.16px;font-size:9.8px;color:#000;-webkit-text-stroke:0.07px;">87,967</span>
<span id="t236" class="t" style="transform:translateX(-50%) scaleX(1.0996);transform-origin:50% 50%;left:921.10px;top:289.16px;font-size:9.8px;color:#000;-webkit-text-stroke:0.07px;">0,000</span>
<span id="t237" class="t" style="transform:translateX(-50%) scaleX(1.0996);transform-origin:50% 50%;left:963.10px;top:289.16px;font-size:9.8px;color:#000;-webkit-text-stroke:0.07px;">0,000</span>
<span id="t238" class="t" style="transform:translateX(-50%) scaleX(1.1095);transform-origin:50% 50%;left:997.10px;top:289.16px;font-size:9.8px;color:#000;-webkit-text-stroke:0.07px;">0</span>
<span id="t239" class="t" style="transform:translateX(-50%) scaleX(1.1095);transform-origin:50% 50%;left:1023.10px;top:289.16px;font-size:9.8px;color:#000;-webkit-text-stroke:0.07px;">0</span>
<span id="t240" class="t" style="transform:translateX(-50%) scaleX(1.1095);transform-origin:50% 50%;left:1049.10px;top:289.16px;font-size:9.8px;color:#000;-webkit-text-stroke:0.07px;">1</span>
<span id="t241" class="t" style="transform:translateX(-50%) scaleX(1.1095);transform-origin:50% 50%;left:1075.10px;top:289.16px;font-size:9.8px;color:#000;-webkit-text-stroke:0.07px;">2</span>
<span id="t242" class="t" style="transform:translateX(-50%) scaleX(1.1020);transform-origin:50% 50%;left:1109.10px;top:289.16px;font-size:9.8px;color:#000;-webkit-text-stroke:0.07px;">14,966</span>
<span id="t243" class="t" style="transform:translateX(-50%) scaleX(1.0996);transform-origin:50% 50%;left:1151.10px;top:289.16px;font-size:9.8px;color:#000;-webkit-text-stroke:0.07px;">6,983</span>
<span id="t244" class="t" style="transform:translateX(-50%) scaleX(1.0996);transform-origin:50% 50%;left:1193.10px;top:289.16px;font-size:9.8px;color:#000;-webkit-text-stroke:0.07px;">0,000</span>
<span id="t245" class="t" style="transform:translateX(-50%) scaleX(1.1095);transform-origin:50% 50%;left:1230.10px;top:289.16px;font-size:9.8px;color:#000;-webkit-text-stroke:0.07px;">2</span>
<span id="t246" class="t" style="transform:translateX(-50%) scaleX(1.1095);transform-origin:50% 50%;left:1256.60px;top:289.16px;font-size:9.8px;color:#000;-webkit-text-stroke:0.07px;">0</span>
<span id="t247" class="t" style="transform:translateX(-50%) scaleX(1.1095);transform-origin:50% 50%;left:1277.60px;top:289.16px;font-size:9.8px;color:#000;-webkit-text-stroke:0.07px;">0</span>
<span id="t248" class="t" style="transform:translateX(-50%) scaleX(1.1095);transform-origin:50% 50%;left:1298.60px;top:289.16px;font-size:9.8px;color:#000;-webkit-text-stroke:0.07px;">0</span>
<span id="t249" class="t" style="transform:translateX(-50%) scaleX(1.1095);transform-origin:50% 50%;left:1319.60px;top:289.16px;font-size:9.8px;color:#000;-webkit-text-stroke:0.07px;">0</span>
<span id="t250" class="t" style="transform:translateX(-50%) scaleX(1.1095);transform-origin:50% 50%;left:1340.60px;top:289.16px;font-size:9.8px;color:#000;-webkit-text-stroke:0.07px;">0</span>
<span id="t251" class="t" style="transform:translateX(-50%) scaleX(1.1095);transform-origin:50% 50%;left:1361.60px;top:289.16px;font-size:9.8px;color:#000;-webkit-text-stroke:0.07px;">0</span>
<span id="t252" class="t" style="transform:translateX(-50%) scaleX(1.1095);transform-origin:50% 50%;left:1382.60px;top:289.16px;font-size:9.8px;color:#000;-webkit-text-stroke:0.07px;">0</span>
<span id="t253" class="t" style="transform:translateX(-50%) scaleX(1.1095);transform-origin:50% 50%;left:1403.60px;top:289.16px;font-size:9.8px;color:#000;-webkit-text-stroke:0.07px;">0</span>
<span id="t254" class="t" style="transform:translateX(-50%) scaleX(1.1095);transform-origin:50% 50%;left:1424.60px;top:289.16px;font-size:9.8px;color:#000;-webkit-text-stroke:0.07px;">0</span>
<span id="t255" class="t" style="transform:translateX(-50%) scaleX(1.1095);transform-origin:50% 50%;left:1445.60px;top:289.16px;font-size:9.8px;color:#000;-webkit-text-stroke:0.07px;">0</span>
<span id="t256" class="t" style="transform:translateX(-50%) scaleX(1.1095);transform-origin:50% 50%;left:1466.60px;top:289.16px;font-size:9.8px;color:#000;-webkit-text-stroke:0.07px;">0</span>
<svg style="left:47.00px;top:280.70px" width="8" height="8" viewBox="0 0 8 8"><path d="M0 0H6.4L0 5.8Z" fill="#1a7a38"/></svg>
<span id="t257" class="t" style="transform:translateX(-50%) scaleX(1.1095);transform-origin:50% 50%;left:33.05px;top:319.16px;font-size:9.8px;color:#000;-webkit-text-stroke:0.07px;">2</span>
<span id="t258" class="t" style="transform:translateX(-50%) scaleX(1.0972);transform-origin:50% 50%;left:72.60px;top:319.16px;font-size:9.8px;color:#000;-webkit-text-stroke:0.07px;">00389</span>
<span id="t259" class="t" style="transform:translateX(-50%) scaleX(1.0132);transform-origin:50% 50%;left:151.50px;top:319.16px;font-size:9.8px;color:#000;-webkit-text-stroke:0.07px;">Nguyễn Văn Quang</span>
<span id="t260" class="t" style="transform:translateX(-50%) scaleX(0.9033);transform-origin:50% 50%;left:212.00px;top:311.66px;font-size:9.8px;color:#000;-webkit-text-stroke:0.07px;">T</span>
<span id="t261" class="t" style="transform:translateX(-50%) scaleX(0.8421);transform-origin:50% 50%;left:212.00px;top:326.66px;font-size:9.8px;color:#000;-webkit-text-stroke:0.07px;">TC</span>
<span id="t262" class="t" style="transform:translateX(-50%) scaleX(0.9613);transform-origin:50% 50%;left:236.10px;top:311.66px;font-size:9.8px;color:#000;-webkit-text-stroke:0.07px;">V</span>
<span id="t263" class="t" style="transform:translateX(-50%) scaleX(0.9613);transform-origin:50% 50%;left:268.10px;top:311.66px;font-size:9.8px;color:#000;-webkit-text-stroke:0.07px;">V</span>
<span id="t264" class="t" style="transform:translateX(-50%) scaleX(0.9613);transform-origin:50% 50%;left:300.10px;top:311.66px;font-size:9.8px;color:#000;-webkit-text-stroke:0.07px;">V</span>
<span id="t265" class="t" style="transform:translateX(-50%) scaleX(0.9613);transform-origin:50% 50%;left:332.10px;top:311.66px;font-size:9.8px;color:#000;-webkit-text-stroke:0.07px;">V</span>
<span id="t266" class="t" style="transform:translateX(-50%) scaleX(1.0401);transform-origin:50% 50%;left:364.10px;top:311.66px;font-size:9.8px;color:#000;-webkit-text-stroke:0.07px;">--</span>
<span id="t267" class="t" style="transform:translateX(-50%) scaleX(0.9613);transform-origin:50% 50%;left:396.10px;top:311.66px;font-size:9.8px;color:#000;-webkit-text-stroke:0.07px;">V</span>
<span id="t268" class="t" style="transform:translateX(-50%) scaleX(0.9613);transform-origin:50% 50%;left:428.10px;top:311.66px;font-size:9.8px;color:#000;-webkit-text-stroke:0.07px;">V</span>
<span id="t269" class="t" style="transform:translateX(-50%) scaleX(0.9613);transform-origin:50% 50%;left:460.10px;top:311.66px;font-size:9.8px;color:#000;-webkit-text-stroke:0.07px;">V</span>
<span id="t270" class="t" style="transform:translateX(-50%) scaleX(0.9613);transform-origin:50% 50%;left:492.10px;top:311.66px;font-size:9.8px;color:#000;-webkit-text-stroke:0.07px;">V</span>
<span id="t271" class="t" style="transform:translateX(-50%) scaleX(0.9613);transform-origin:50% 50%;left:524.10px;top:311.66px;font-size:9.8px;color:#000;-webkit-text-stroke:0.07px;">V</span>
<span id="t272" class="t" style="transform:translateX(-50%) scaleX(0.9613);transform-origin:50% 50%;left:556.10px;top:311.66px;font-size:9.8px;color:#000;-webkit-text-stroke:0.07px;">V</span>
<span id="t273" class="t" style="transform:translateX(-50%) scaleX(0.9226);transform-origin:50% 50%;left:588.10px;top:311.66px;font-size:9.8px;color:#000;-webkit-text-stroke:0.07px;">KV</span>
<span id="t274" class="t" style="transform:translateX(-50%) scaleX(0.9613);transform-origin:50% 50%;left:620.10px;top:311.66px;font-size:9.8px;color:#000;-webkit-text-stroke:0.07px;">V</span>
<span id="t275" class="t" style="transform:translateX(-50%) scaleX(1.0968);transform-origin:50% 50%;left:652.10px;top:311.66px;font-size:9.8px;color:#000;-webkit-text-stroke:0.07px;">7,82</span>
<span id="t276" class="t" style="transform:translateX(-50%) scaleX(1.1095);transform-origin:50% 50%;left:684.10px;top:311.66px;font-size:9.8px;color:#000;-webkit-text-stroke:0.07px;">8</span>
<span id="t277" class="t" style="transform:translateX(-50%) scaleX(0.8660);transform-origin:50% 50%;left:716.10px;top:311.66px;font-size:9.8px;color:#000;-webkit-text-stroke:0.07px;">KR</span>
<span id="t278" class="t" style="transform:translateX(-50%) scaleX(1.0996);transform-origin:50% 50%;left:753.10px;top:319.16px;font-size:9.8px;color:#000;-webkit-text-stroke:0.07px;">1,977</span>
<span id="t279" class="t" style="transform:translateX(-50%) scaleX(1.0996);transform-origin:50% 50%;left:795.10px;top:319.16px;font-size:9.8px;color:#000;-webkit-text-stroke:0.07px;">0,000</span>
<span id="t280" class="t" style="transform:translateX(-50%) scaleX(1.0996);transform-origin:50% 50%;left:837.10px;top:319.16px;font-size:9.8px;color:#000;-webkit-text-stroke:0.07px;">0,000</span>
<span id="t281" class="t" style="transform:translateX(-50%) scaleX(1.1020);transform-origin:50% 50%;left:879.10px;top:319.16px;font-size:9.8px;color:#000;-webkit-text-stroke:0.07px;">15,817</span>
<span id="t282" class="t" style="transform:translateX(-50%) scaleX(1.0996);transform-origin:50% 50%;left:921.10px;top:319.16px;font-size:9.8px;color:#000;-webkit-text-stroke:0.07px;">0,000</span>
<span id="t283" class="t" style="transform:translateX(-50%) scaleX(1.0996);transform-origin:50% 50%;left:963.10px;top:319.16px;font-size:9.8px;color:#000;-webkit-text-stroke:0.07px;">0,000</span>
<span id="t284" class="t" style="transform:translateX(-50%) scaleX(1.1095);transform-origin:50% 50%;left:997.10px;top:319.16px;font-size:9.8px;color:#000;-webkit-text-stroke:0.07px;">2</span>
<span id="t285" class="t" style="transform:translateX(-50%) scaleX(1.1095);transform-origin:50% 50%;left:1023.10px;top:319.16px;font-size:9.8px;color:#000;-webkit-text-stroke:0.07px;">13</span>
<span id="t286" class="t" style="transform:translateX(-50%) scaleX(1.1095);transform-origin:50% 50%;left:1049.10px;top:319.16px;font-size:9.8px;color:#000;-webkit-text-stroke:0.07px;">0</span>
<span id="t287" class="t" style="transform:translateX(-50%) scaleX(1.1095);transform-origin:50% 50%;left:1075.10px;top:319.16px;font-size:9.8px;color:#000;-webkit-text-stroke:0.07px;">0</span>
<span id="t288" class="t" style="transform:translateX(-50%) scaleX(1.0996);transform-origin:50% 50%;left:1109.10px;top:319.16px;font-size:9.8px;color:#000;-webkit-text-stroke:0.07px;">0,000</span>
<span id="t289" class="t" style="transform:translateX(-50%) scaleX(1.0996);transform-origin:50% 50%;left:1151.10px;top:319.16px;font-size:9.8px;color:#000;-webkit-text-stroke:0.07px;">0,000</span>
<span id="t290" class="t" style="transform:translateX(-50%) scaleX(1.0996);transform-origin:50% 50%;left:1193.10px;top:319.16px;font-size:9.8px;color:#000;-webkit-text-stroke:0.07px;">0,000</span>
<span id="t291" class="t" style="transform:translateX(-50%) scaleX(1.1896);transform-origin:50% 50%;left:1230.10px;top:319.16px;font-size:9.8px;color:#000;-webkit-text-stroke:0.07px;">11</span>
<span id="t292" class="t" style="transform:translateX(-50%) scaleX(1.1095);transform-origin:50% 50%;left:1256.60px;top:319.16px;font-size:9.8px;color:#000;-webkit-text-stroke:0.07px;">0</span>
<span id="t293" class="t" style="transform:translateX(-50%) scaleX(1.1095);transform-origin:50% 50%;left:1277.60px;top:319.16px;font-size:9.8px;color:#000;-webkit-text-stroke:0.07px;">0</span>
<span id="t294" class="t" style="transform:translateX(-50%) scaleX(1.1095);transform-origin:50% 50%;left:1298.60px;top:319.16px;font-size:9.8px;color:#000;-webkit-text-stroke:0.07px;">0</span>
<span id="t295" class="t" style="transform:translateX(-50%) scaleX(1.1095);transform-origin:50% 50%;left:1319.60px;top:319.16px;font-size:9.8px;color:#000;-webkit-text-stroke:0.07px;">0</span>
<span id="t296" class="t" style="transform:translateX(-50%) scaleX(1.1095);transform-origin:50% 50%;left:1340.60px;top:319.16px;font-size:9.8px;color:#000;-webkit-text-stroke:0.07px;">0</span>
<span id="t297" class="t" style="transform:translateX(-50%) scaleX(1.1095);transform-origin:50% 50%;left:1361.60px;top:319.16px;font-size:9.8px;color:#000;-webkit-text-stroke:0.07px;">0</span>
<span id="t298" class="t" style="transform:translateX(-50%) scaleX(1.1095);transform-origin:50% 50%;left:1382.60px;top:319.16px;font-size:9.8px;color:#000;-webkit-text-stroke:0.07px;">0</span>
<span id="t299" class="t" style="transform:translateX(-50%) scaleX(1.1095);transform-origin:50% 50%;left:1403.60px;top:319.16px;font-size:9.8px;color:#000;-webkit-text-stroke:0.07px;">0</span>
<span id="t300" class="t" style="transform:translateX(-50%) scaleX(1.1095);transform-origin:50% 50%;left:1424.60px;top:319.16px;font-size:9.8px;color:#000;-webkit-text-stroke:0.07px;">0</span>
<span id="t301" class="t" style="transform:translateX(-50%) scaleX(1.1095);transform-origin:50% 50%;left:1445.60px;top:319.16px;font-size:9.8px;color:#000;-webkit-text-stroke:0.07px;">0</span>
<span id="t302" class="t" style="transform:translateX(-50%) scaleX(1.1095);transform-origin:50% 50%;left:1466.60px;top:319.16px;font-size:9.8px;color:#000;-webkit-text-stroke:0.07px;">0</span>
<svg style="left:47.00px;top:310.70px" width="8" height="8" viewBox="0 0 8 8"><path d="M0 0H6.4L0 5.8Z" fill="#1a7a38"/></svg>
<span id="t303" class="t" style="transform:translateX(-50%) scaleX(1.1095);transform-origin:50% 50%;left:33.05px;top:349.16px;font-size:9.8px;color:#000;-webkit-text-stroke:0.07px;">3</span>
<span id="t304" class="t" style="transform:translateX(-50%) scaleX(1.1095);transform-origin:50% 50%;left:72.60px;top:349.16px;font-size:9.8px;color:#000;-webkit-text-stroke:0.07px;">637</span>
<span id="t305" class="t" style="transform:translateX(-50%) scaleX(1.0247);transform-origin:50% 50%;left:151.50px;top:349.16px;font-size:9.8px;color:#000;-webkit-text-stroke:0.07px;">Nguyễn T Minh Hằng</span>
<span id="t306" class="t" style="transform:translateX(-50%) scaleX(0.9033);transform-origin:50% 50%;left:212.00px;top:341.66px;font-size:9.8px;color:#000;-webkit-text-stroke:0.07px;">T</span>
<span id="t307" class="t" style="transform:translateX(-50%) scaleX(0.8421);transform-origin:50% 50%;left:212.00px;top:356.66px;font-size:9.8px;color:#000;-webkit-text-stroke:0.07px;">TC</span>
<span id="t308" class="t" style="transform:translateX(-50%) scaleX(1.1095);transform-origin:50% 50%;left:236.10px;top:341.66px;font-size:9.8px;color:#000;-webkit-text-stroke:0.07px;">8</span>
<span id="t309" class="t" style="transform:translateX(-50%) scaleX(1.1095);transform-origin:50% 50%;left:268.10px;top:341.66px;font-size:9.8px;color:#000;-webkit-text-stroke:0.07px;">8</span>
<span id="t310" class="t" style="transform:translateX(-50%) scaleX(1.1095);transform-origin:50% 50%;left:300.10px;top:341.66px;font-size:9.8px;color:#000;-webkit-text-stroke:0.07px;">8</span>
<span id="t311" class="t" style="transform:translateX(-50%) scaleX(1.1095);transform-origin:50% 50%;left:332.10px;top:341.66px;font-size:9.8px;color:#000;-webkit-text-stroke:0.07px;">8</span>
<span id="t312" class="t" style="transform:translateX(-50%) scaleX(1.0968);transform-origin:50% 50%;left:364.10px;top:341.66px;font-size:9.8px;color:#000;-webkit-text-stroke:0.07px;">7,93</span>
<span id="t313" class="t" style="transform:translateX(-50%) scaleX(0.9613);transform-origin:50% 50%;left:396.10px;top:341.66px;font-size:9.8px;color:#000;-webkit-text-stroke:0.07px;">V</span>
<span id="t314" class="t" style="transform:translateX(-50%) scaleX(1.1095);transform-origin:50% 50%;left:428.10px;top:341.66px;font-size:9.8px;color:#000;-webkit-text-stroke:0.07px;">8</span>
<span id="t315" class="t" style="transform:translateX(-50%) scaleX(1.1095);transform-origin:50% 50%;left:460.10px;top:341.66px;font-size:9.8px;color:#000;-webkit-text-stroke:0.07px;">8</span>
<span id="t316" class="t" style="transform:translateX(-50%) scaleX(1.0968);transform-origin:50% 50%;left:492.10px;top:341.66px;font-size:9.8px;color:#000;-webkit-text-stroke:0.07px;">7,95</span>
<span id="t317" class="t" style="transform:translateX(-50%) scaleX(1.0968);transform-origin:50% 50%;left:524.10px;top:341.66px;font-size:9.8px;color:#000;-webkit-text-stroke:0.07px;">7,97</span>
<span id="t318" class="t" style="transform:translateX(-50%) scaleX(1.1095);transform-origin:50% 50%;left:556.10px;top:341.66px;font-size:9.8px;color:#000;-webkit-text-stroke:0.07px;">8</span>
<span id="t319" class="t" style="transform:translateX(-50%) scaleX(0.8660);transform-origin:50% 50%;left:588.10px;top:341.66px;font-size:9.8px;color:#000;-webkit-text-stroke:0.07px;">KR</span>
<span id="t320" class="t" style="transform:translateX(-50%) scaleX(0.9613);transform-origin:50% 50%;left:620.10px;top:341.66px;font-size:9.8px;color:#000;-webkit-text-stroke:0.07px;">V</span>
<span id="t321" class="t" style="transform:translateX(-50%) scaleX(1.1095);transform-origin:50% 50%;left:652.10px;top:341.66px;font-size:9.8px;color:#000;-webkit-text-stroke:0.07px;">8</span>
<span id="t322" class="t" style="transform:translateX(-50%) scaleX(1.1095);transform-origin:50% 50%;left:684.10px;top:341.66px;font-size:9.8px;color:#000;-webkit-text-stroke:0.07px;">8</span>
<span id="t323" class="t" style="transform:translateX(-50%) scaleX(1.0968);transform-origin:50% 50%;left:716.10px;top:341.66px;font-size:9.8px;color:#000;-webkit-text-stroke:0.07px;">7,97</span>
<span id="t324" class="t" style="transform:translateX(-50%) scaleX(1.0996);transform-origin:50% 50%;left:428.10px;top:356.66px;font-size:9.8px;color:#000;-webkit-text-stroke:0.07px;">1,700</span>
<span id="t325" class="t" style="transform:translateX(-50%) scaleX(1.0996);transform-origin:50% 50%;left:460.10px;top:356.66px;font-size:9.8px;color:#000;-webkit-text-stroke:0.07px;">4,200</span>
<span id="t326" class="t" style="transform:translateX(-50%) scaleX(1.0996);transform-origin:50% 50%;left:492.10px;top:356.66px;font-size:9.8px;color:#000;-webkit-text-stroke:0.07px;">1,033</span>
<span id="t327" class="t" style="transform:translateX(-50%) scaleX(1.0996);transform-origin:50% 50%;left:524.10px;top:356.66px;font-size:9.8px;color:#000;-webkit-text-stroke:0.07px;">4,500</span>
<span id="t328" class="t" style="transform:translateX(-50%) scaleX(1.0996);transform-origin:50% 50%;left:556.10px;top:356.66px;font-size:9.8px;color:#000;-webkit-text-stroke:0.07px;">0,550</span>
<span id="t329" class="t" style="transform:translateX(-50%) scaleX(1.0996);transform-origin:50% 50%;left:652.10px;top:356.66px;font-size:9.8px;color:#000;-webkit-text-stroke:0.07px;">4,133</span>
<span id="t330" class="t" style="transform:translateX(-50%) scaleX(1.0996);transform-origin:50% 50%;left:684.10px;top:356.66px;font-size:9.8px;color:#000;-webkit-text-stroke:0.07px;">2,017</span>
<span id="t331" class="t" style="transform:translateX(-50%) scaleX(1.0996);transform-origin:50% 50%;left:716.10px;top:356.66px;font-size:9.8px;color:#000;-webkit-text-stroke:0.07px;">4,500</span>
<span id="t332" class="t" style="transform:translateX(-50%) scaleX(1.1291);transform-origin:50% 50%;left:753.10px;top:349.16px;font-size:9.8px;color:#000;-webkit-text-stroke:0.07px;">11,986</span>
<span id="t333" class="t" style="transform:translateX(-50%) scaleX(1.0996);transform-origin:50% 50%;left:795.10px;top:349.16px;font-size:9.8px;color:#000;-webkit-text-stroke:0.07px;">0,992</span>
<span id="t334" class="t" style="transform:translateX(-50%) scaleX(1.0996);transform-origin:50% 50%;left:837.10px;top:349.16px;font-size:9.8px;color:#000;-webkit-text-stroke:0.07px;">0,000</span>
<span id="t335" class="t" style="transform:translateX(-50%) scaleX(1.1020);transform-origin:50% 50%;left:879.10px;top:349.16px;font-size:9.8px;color:#000;-webkit-text-stroke:0.07px;">95,884</span>
<span id="t336" class="t" style="transform:translateX(-50%) scaleX(1.0996);transform-origin:50% 50%;left:921.10px;top:349.16px;font-size:9.8px;color:#000;-webkit-text-stroke:0.07px;">7,933</span>
<span id="t337" class="t" style="transform:translateX(-50%) scaleX(1.0996);transform-origin:50% 50%;left:963.10px;top:349.16px;font-size:9.8px;color:#000;-webkit-text-stroke:0.07px;">0,000</span>
<span id="t338" class="t" style="transform:translateX(-50%) scaleX(1.1095);transform-origin:50% 50%;left:997.10px;top:349.16px;font-size:9.8px;color:#000;-webkit-text-stroke:0.07px;">4</span>
<span id="t339" class="t" style="transform:translateX(-50%) scaleX(1.1095);transform-origin:50% 50%;left:1023.10px;top:349.16px;font-size:9.8px;color:#000;-webkit-text-stroke:0.07px;">8</span>
<span id="t340" class="t" style="transform:translateX(-50%) scaleX(1.1095);transform-origin:50% 50%;left:1049.10px;top:349.16px;font-size:9.8px;color:#000;-webkit-text-stroke:0.07px;">1</span>
<span id="t341" class="t" style="transform:translateX(-50%) scaleX(1.1095);transform-origin:50% 50%;left:1075.10px;top:349.16px;font-size:9.8px;color:#000;-webkit-text-stroke:0.07px;">4</span>
<span id="t342" class="t" style="transform:translateX(-50%) scaleX(1.1020);transform-origin:50% 50%;left:1109.10px;top:349.16px;font-size:9.8px;color:#000;-webkit-text-stroke:0.07px;">15,300</span>
<span id="t343" class="t" style="transform:translateX(-50%) scaleX(1.0996);transform-origin:50% 50%;left:1151.10px;top:349.16px;font-size:9.8px;color:#000;-webkit-text-stroke:0.07px;">7,333</span>
<span id="t344" class="t" style="transform:translateX(-50%) scaleX(1.0996);transform-origin:50% 50%;left:1193.10px;top:349.16px;font-size:9.8px;color:#000;-webkit-text-stroke:0.07px;">0,000</span>
<span id="t345" class="t" style="transform:translateX(-50%) scaleX(1.1095);transform-origin:50% 50%;left:1230.10px;top:349.16px;font-size:9.8px;color:#000;-webkit-text-stroke:0.07px;">2</span>
<span id="t346" class="t" style="transform:translateX(-50%) scaleX(1.1095);transform-origin:50% 50%;left:1256.60px;top:349.16px;font-size:9.8px;color:#000;-webkit-text-stroke:0.07px;">0</span>
<span id="t347" class="t" style="transform:translateX(-50%) scaleX(1.1095);transform-origin:50% 50%;left:1277.60px;top:349.16px;font-size:9.8px;color:#000;-webkit-text-stroke:0.07px;">0</span>
<span id="t348" class="t" style="transform:translateX(-50%) scaleX(1.1095);transform-origin:50% 50%;left:1298.60px;top:349.16px;font-size:9.8px;color:#000;-webkit-text-stroke:0.07px;">0</span>
<span id="t349" class="t" style="transform:translateX(-50%) scaleX(1.1095);transform-origin:50% 50%;left:1319.60px;top:349.16px;font-size:9.8px;color:#000;-webkit-text-stroke:0.07px;">0</span>
<span id="t350" class="t" style="transform:translateX(-50%) scaleX(1.1095);transform-origin:50% 50%;left:1340.60px;top:349.16px;font-size:9.8px;color:#000;-webkit-text-stroke:0.07px;">0</span>
<span id="t351" class="t" style="transform:translateX(-50%) scaleX(1.1095);transform-origin:50% 50%;left:1361.60px;top:349.16px;font-size:9.8px;color:#000;-webkit-text-stroke:0.07px;">0</span>
<span id="t352" class="t" style="transform:translateX(-50%) scaleX(1.1095);transform-origin:50% 50%;left:1382.60px;top:349.16px;font-size:9.8px;color:#000;-webkit-text-stroke:0.07px;">0</span>
<span id="t353" class="t" style="transform:translateX(-50%) scaleX(1.1095);transform-origin:50% 50%;left:1403.60px;top:349.16px;font-size:9.8px;color:#000;-webkit-text-stroke:0.07px;">0</span>
<span id="t354" class="t" style="transform:translateX(-50%) scaleX(1.1095);transform-origin:50% 50%;left:1424.60px;top:349.16px;font-size:9.8px;color:#000;-webkit-text-stroke:0.07px;">0</span>
<span id="t355" class="t" style="transform:translateX(-50%) scaleX(1.1095);transform-origin:50% 50%;left:1445.60px;top:349.16px;font-size:9.8px;color:#000;-webkit-text-stroke:0.07px;">0</span>
<span id="t356" class="t" style="transform:translateX(-50%) scaleX(1.1095);transform-origin:50% 50%;left:1466.60px;top:349.16px;font-size:9.8px;color:#000;-webkit-text-stroke:0.07px;">0</span>
<svg style="left:47.00px;top:340.70px" width="8" height="8" viewBox="0 0 8 8"><path d="M0 0H6.4L0 5.8Z" fill="#1a7a38"/></svg>
<span id="t357" class="t" style="transform:translateX(-50%) scaleX(1.1095);transform-origin:50% 50%;left:33.05px;top:379.16px;font-size:9.8px;color:#000;-webkit-text-stroke:0.07px;">4</span>
<span id="t358" class="t" style="transform:translateX(-50%) scaleX(1.1095);transform-origin:50% 50%;left:72.60px;top:379.16px;font-size:9.8px;color:#000;-webkit-text-stroke:0.07px;">655</span>
<span id="t359" class="t" style="transform:translateX(-50%) scaleX(1.0127);transform-origin:50% 50%;left:151.50px;top:379.16px;font-size:9.8px;color:#000;-webkit-text-stroke:0.07px;">Trương Thị Quyên</span>
<span id="t360" class="t" style="transform:translateX(-50%) scaleX(0.9033);transform-origin:50% 50%;left:212.00px;top:371.66px;font-size:9.8px;color:#000;-webkit-text-stroke:0.07px;">T</span>
<span id="t361" class="t" style="transform:translateX(-50%) scaleX(0.8421);transform-origin:50% 50%;left:212.00px;top:386.66px;font-size:9.8px;color:#000;-webkit-text-stroke:0.07px;">TC</span>
<span id="t362" class="t" style="transform:translateX(-50%) scaleX(1.1095);transform-origin:50% 50%;left:236.10px;top:371.66px;font-size:9.8px;color:#000;-webkit-text-stroke:0.07px;">8</span>
<span id="t363" class="t" style="transform:translateX(-50%) scaleX(1.1095);transform-origin:50% 50%;left:268.10px;top:371.66px;font-size:9.8px;color:#000;-webkit-text-stroke:0.07px;">8</span>
<span id="t364" class="t" style="transform:translateX(-50%) scaleX(1.1095);transform-origin:50% 50%;left:300.10px;top:371.66px;font-size:9.8px;color:#000;-webkit-text-stroke:0.07px;">8</span>
<span id="t365" class="t" style="transform:translateX(-50%) scaleX(1.0968);transform-origin:50% 50%;left:332.10px;top:371.66px;font-size:9.8px;color:#000;-webkit-text-stroke:0.07px;">7,93</span>
<span id="t366" class="t" style="transform:translateX(-50%) scaleX(1.0968);transform-origin:50% 50%;left:364.10px;top:371.66px;font-size:9.8px;color:#000;-webkit-text-stroke:0.07px;">7,88</span>
<span id="t367" class="t" style="transform:translateX(-50%) scaleX(0.9613);transform-origin:50% 50%;left:396.10px;top:371.66px;font-size:9.8px;color:#000;-webkit-text-stroke:0.07px;">V</span>
<span id="t368" class="t" style="transform:translateX(-50%) scaleX(1.0968);transform-origin:50% 50%;left:428.10px;top:371.66px;font-size:9.8px;color:#000;-webkit-text-stroke:0.07px;">7,57</span>
<span id="t369" class="t" style="transform:translateX(-50%) scaleX(1.1095);transform-origin:50% 50%;left:460.10px;top:371.66px;font-size:9.8px;color:#000;-webkit-text-stroke:0.07px;">8</span>
<span id="t370" class="t" style="transform:translateX(-50%) scaleX(1.1095);transform-origin:50% 50%;left:492.10px;top:371.66px;font-size:9.8px;color:#000;-webkit-text-stroke:0.07px;">8</span>
<span id="t371" class="t" style="transform:translateX(-50%) scaleX(1.1095);transform-origin:50% 50%;left:524.10px;top:371.66px;font-size:9.8px;color:#000;-webkit-text-stroke:0.07px;">8</span>
<span id="t372" class="t" style="transform:translateX(-50%) scaleX(1.1095);transform-origin:50% 50%;left:556.10px;top:371.66px;font-size:9.8px;color:#000;-webkit-text-stroke:0.07px;">8</span>
<span id="t373" class="t" style="transform:translateX(-50%) scaleX(1.1095);transform-origin:50% 50%;left:588.10px;top:371.66px;font-size:9.8px;color:#000;-webkit-text-stroke:0.07px;">8</span>
<span id="t374" class="t" style="transform:translateX(-50%) scaleX(0.9613);transform-origin:50% 50%;left:620.10px;top:371.66px;font-size:9.8px;color:#000;-webkit-text-stroke:0.07px;">V</span>
<span id="t375" class="t" style="transform:translateX(-50%) scaleX(0.9226);transform-origin:50% 50%;left:652.10px;top:371.66px;font-size:9.8px;color:#000;-webkit-text-stroke:0.07px;">KV</span>
<span id="t376" class="t" style="transform:translateX(-50%) scaleX(1.1095);transform-origin:50% 50%;left:684.10px;top:371.66px;font-size:9.8px;color:#000;-webkit-text-stroke:0.07px;">8</span>
<span id="t377" class="t" style="transform:translateX(-50%) scaleX(1.1095);transform-origin:50% 50%;left:716.10px;top:371.66px;font-size:9.8px;color:#000;-webkit-text-stroke:0.07px;">8</span>
<span id="t378" class="t" style="transform:translateX(-50%) scaleX(1.0996);transform-origin:50% 50%;left:236.10px;top:386.66px;font-size:9.8px;color:#000;-webkit-text-stroke:0.07px;">0,500</span>
<span id="t379" class="t" style="transform:translateX(-50%) scaleX(1.0996);transform-origin:50% 50%;left:460.10px;top:386.66px;font-size:9.8px;color:#000;-webkit-text-stroke:0.07px;">1,517</span>
<span id="t380" class="t" style="transform:translateX(-50%) scaleX(1.0996);transform-origin:50% 50%;left:492.10px;top:386.66px;font-size:9.8px;color:#000;-webkit-text-stroke:0.07px;">0,583</span>
<span id="t381" class="t" style="transform:translateX(-50%) scaleX(1.0996);transform-origin:50% 50%;left:524.10px;top:386.66px;font-size:9.8px;color:#000;-webkit-text-stroke:0.07px;">0,567</span>
<span id="t382" class="t" style="transform:translateX(-50%) scaleX(1.0996);transform-origin:50% 50%;left:684.10px;top:386.66px;font-size:9.8px;color:#000;-webkit-text-stroke:0.07px;">1,517</span>
<span id="t383" class="t" style="transform:translateX(-50%) scaleX(1.0996);transform-origin:50% 50%;left:716.10px;top:386.66px;font-size:9.8px;color:#000;-webkit-text-stroke:0.07px;">1,517</span>
<span id="t384" class="t" style="transform:translateX(-50%) scaleX(1.1020);transform-origin:50% 50%;left:753.10px;top:379.16px;font-size:9.8px;color:#000;-webkit-text-stroke:0.07px;">10,938</span>
<span id="t385" class="t" style="transform:translateX(-50%) scaleX(1.0996);transform-origin:50% 50%;left:795.10px;top:379.16px;font-size:9.8px;color:#000;-webkit-text-stroke:0.07px;">1,985</span>
<span id="t386" class="t" style="transform:translateX(-50%) scaleX(1.0996);transform-origin:50% 50%;left:837.10px;top:379.16px;font-size:9.8px;color:#000;-webkit-text-stroke:0.07px;">0,000</span>
<span id="t387" class="t" style="transform:translateX(-50%) scaleX(1.1020);transform-origin:50% 50%;left:879.10px;top:379.16px;font-size:9.8px;color:#000;-webkit-text-stroke:0.07px;">87,500</span>
<span id="t388" class="t" style="transform:translateX(-50%) scaleX(1.1020);transform-origin:50% 50%;left:921.10px;top:379.16px;font-size:9.8px;color:#000;-webkit-text-stroke:0.07px;">15,883</span>
<span id="t389" class="t" style="transform:translateX(-50%) scaleX(1.0996);transform-origin:50% 50%;left:963.10px;top:379.16px;font-size:9.8px;color:#000;-webkit-text-stroke:0.07px;">0,000</span>
<span id="t390" class="t" style="transform:translateX(-50%) scaleX(1.1095);transform-origin:50% 50%;left:997.10px;top:379.16px;font-size:9.8px;color:#000;-webkit-text-stroke:0.07px;">0</span>
<span id="t391" class="t" style="transform:translateX(-50%) scaleX(1.1095);transform-origin:50% 50%;left:1023.10px;top:379.16px;font-size:9.8px;color:#000;-webkit-text-stroke:0.07px;">0</span>
<span id="t392" class="t" style="transform:translateX(-50%) scaleX(1.1095);transform-origin:50% 50%;left:1049.10px;top:379.16px;font-size:9.8px;color:#000;-webkit-text-stroke:0.07px;">3</span>
<span id="t393" class="t" style="transform:translateX(-50%) scaleX(1.1095);transform-origin:50% 50%;left:1075.10px;top:379.16px;font-size:9.8px;color:#000;-webkit-text-stroke:0.07px;">37</span>
<span id="t394" class="t" style="transform:translateX(-50%) scaleX(1.0996);transform-origin:50% 50%;left:1109.10px;top:379.16px;font-size:9.8px;color:#000;-webkit-text-stroke:0.07px;">6,201</span>
<span id="t395" class="t" style="transform:translateX(-50%) scaleX(1.0996);transform-origin:50% 50%;left:1151.10px;top:379.16px;font-size:9.8px;color:#000;-webkit-text-stroke:0.07px;">0,000</span>
<span id="t396" class="t" style="transform:translateX(-50%) scaleX(1.0996);transform-origin:50% 50%;left:1193.10px;top:379.16px;font-size:9.8px;color:#000;-webkit-text-stroke:0.07px;">0,000</span>
<span id="t397" class="t" style="transform:translateX(-50%) scaleX(1.1095);transform-origin:50% 50%;left:1230.10px;top:379.16px;font-size:9.8px;color:#000;-webkit-text-stroke:0.07px;">2</span>
<span id="t398" class="t" style="transform:translateX(-50%) scaleX(1.1095);transform-origin:50% 50%;left:1256.60px;top:379.16px;font-size:9.8px;color:#000;-webkit-text-stroke:0.07px;">0</span>
<span id="t399" class="t" style="transform:translateX(-50%) scaleX(1.1095);transform-origin:50% 50%;left:1277.60px;top:379.16px;font-size:9.8px;color:#000;-webkit-text-stroke:0.07px;">0</span>
<span id="t400" class="t" style="transform:translateX(-50%) scaleX(1.1095);transform-origin:50% 50%;left:1298.60px;top:379.16px;font-size:9.8px;color:#000;-webkit-text-stroke:0.07px;">0</span>
<span id="t401" class="t" style="transform:translateX(-50%) scaleX(1.1095);transform-origin:50% 50%;left:1319.60px;top:379.16px;font-size:9.8px;color:#000;-webkit-text-stroke:0.07px;">0</span>
<span id="t402" class="t" style="transform:translateX(-50%) scaleX(1.1095);transform-origin:50% 50%;left:1340.60px;top:379.16px;font-size:9.8px;color:#000;-webkit-text-stroke:0.07px;">0</span>
<span id="t403" class="t" style="transform:translateX(-50%) scaleX(1.1095);transform-origin:50% 50%;left:1361.60px;top:379.16px;font-size:9.8px;color:#000;-webkit-text-stroke:0.07px;">0</span>
<span id="t404" class="t" style="transform:translateX(-50%) scaleX(1.1095);transform-origin:50% 50%;left:1382.60px;top:379.16px;font-size:9.8px;color:#000;-webkit-text-stroke:0.07px;">0</span>
<span id="t405" class="t" style="transform:translateX(-50%) scaleX(1.1095);transform-origin:50% 50%;left:1403.60px;top:379.16px;font-size:9.8px;color:#000;-webkit-text-stroke:0.07px;">0</span>
<span id="t406" class="t" style="transform:translateX(-50%) scaleX(1.1095);transform-origin:50% 50%;left:1424.60px;top:379.16px;font-size:9.8px;color:#000;-webkit-text-stroke:0.07px;">0</span>
<span id="t407" class="t" style="transform:translateX(-50%) scaleX(1.1095);transform-origin:50% 50%;left:1445.60px;top:379.16px;font-size:9.8px;color:#000;-webkit-text-stroke:0.07px;">0</span>
<span id="t408" class="t" style="transform:translateX(-50%) scaleX(1.1095);transform-origin:50% 50%;left:1466.60px;top:379.16px;font-size:9.8px;color:#000;-webkit-text-stroke:0.07px;">0</span>
<svg style="left:47.00px;top:370.70px" width="8" height="8" viewBox="0 0 8 8"><path d="M0 0H6.4L0 5.8Z" fill="#1a7a38"/></svg>
<div style="left:221.00px;top:415.70px;width:63.00px;height:14.00px;background:#fff;"></div>
<span id="t409" class="t" style="transform:scaleX(1.0341);transform-origin:0 50%;left:223.25px;top:416.66px;font-size:9.8px;color:#000;-webkit-text-stroke:0.07px;">Nghi chú:</span>
<div style="left:253.00px;top:430.70px;width:159.00px;height:14.00px;background:#fff;"></div>
<span id="t410" class="t" style="transform:scaleX(0.9998);transform-origin:0 50%;left:255.15px;top:431.66px;font-size:9.8px;color:#000;-webkit-text-stroke:0.07px;">NT: Ngày thường, </span>
<span id="t411" class="t" style="transform:scaleX(1.0276);transform-origin:0 50%;left:335.65px;top:431.66px;font-size:9.8px;color:#000;-webkit-text-stroke:0.07px;">CT: Cuối tuần</span>
<div style="left:253.00px;top:445.70px;width:287.00px;height:14.00px;background:#fff;"></div>
<span id="t412" class="t" style="transform:scaleX(0.9786);transform-origin:0 50%;left:254.75px;top:446.66px;font-size:9.8px;color:#000;-webkit-text-stroke:0.07px;">TC1: Tăng ca mức 1, </span>
<span id="t413" class="t" style="transform:scaleX(0.9807);transform-origin:0 50%;left:347.85px;top:446.66px;font-size:9.8px;color:#000;-webkit-text-stroke:0.07px;">TC2: Tăng ca mức 2, </span>
<span id="t414" class="t" style="transform:scaleX(0.9756);transform-origin:0 50%;left:441.15px;top:446.66px;font-size:9.8px;color:#000;-webkit-text-stroke:0.07px;">TC3: Tăng ca mức 3</span>
<div style="left:253.00px;top:460.70px;width:877.00px;height:14.00px;background:#fff;"></div>
<span id="t415" class="t" style="transform:scaleX(1.0292);transform-origin:0 50%;left:254.75px;top:461.66px;font-size:9.8px;color:#000;-webkit-text-stroke:0.07px;">OM:Nghỉ ốm; </span>
<span id="t416" class="t" style="transform:scaleX(0.9710);transform-origin:0 50%;left:316.95px;top:461.66px;font-size:9.8px;color:#000;-webkit-text-stroke:0.07px;">TS:Nghỉ Thai Sản; </span>
<span id="t417" class="t" style="transform:scaleX(1.0171);transform-origin:0 50%;left:397.15px;top:461.66px;font-size:9.8px;color:#000;-webkit-text-stroke:0.07px;">R:Việc riêng có lương; </span>
<span id="t418" class="t" style="transform:scaleX(1.0214);transform-origin:0 50%;left:499.35px;top:461.66px;font-size:9.8px;color:#000;-webkit-text-stroke:0.07px;">Ro:Việc riêng không lương; </span>
<span id="t419" class="t" style="transform:scaleX(1.0392);transform-origin:0 50%;left:624.25px;top:461.66px;font-size:9.8px;color:#000;-webkit-text-stroke:0.07px;">P:Nghỉ phép; </span>
<span id="t420" class="t" style="transform:scaleX(1.0210);transform-origin:0 50%;left:685.95px;top:461.66px;font-size:9.8px;color:#000;-webkit-text-stroke:0.07px;">F:Nghỉ phép năm; </span>
<span id="t421" class="t" style="transform:scaleX(0.9830);transform-origin:0 50%;left:768.25px;top:461.66px;font-size:9.8px;color:#000;-webkit-text-stroke:0.07px;">CO:Con ốm; </span>
<span id="t422" class="t" style="transform:scaleX(1.0009);transform-origin:0 50%;left:824.45px;top:461.66px;font-size:9.8px;color:#000;-webkit-text-stroke:0.07px;">CD:Cúp điện; </span>
<span id="t423" class="t" style="transform:scaleX(1.0234);transform-origin:0 50%;left:886.05px;top:461.66px;font-size:9.8px;color:#000;-webkit-text-stroke:0.07px;">H:Nghỉ hội hợp, </span>
<span id="t424" class="t" style="transform:scaleX(1.0613);transform-origin:0 50%;left:958.95px;top:461.66px;font-size:9.8px;color:#000;-webkit-text-stroke:0.07px;">học tập; </span>
<span id="t425" class="t" style="transform:scaleX(1.0182);transform-origin:0 50%;left:998.85px;top:461.66px;font-size:9.8px;color:#000;-webkit-text-stroke:0.07px;">CT:Nghỉ công tác; </span>
<span id="t426" class="t" style="transform:scaleX(1.0439);transform-origin:0 50%;left:1080.35px;top:461.66px;font-size:9.8px;color:#000;-webkit-text-stroke:0.07px;">Le:Nghỉ lễ;</span>
<div style="left:253.00px;top:475.70px;width:689.00px;height:14.00px;background:#fff;"></div>
<span id="t427" class="t" style="transform:scaleX(1.0036);transform-origin:0 50%;left:254.75px;top:476.66px;font-size:9.8px;color:#000;-webkit-text-stroke:0.07px;">V: Vắng (không có chấm công); </span>
<span id="t428" class="t" style="transform:scaleX(1.0258);transform-origin:0 50%;left:394.85px;top:476.66px;font-size:9.8px;color:#000;-webkit-text-stroke:0.07px;">Tr: Đi trễ; </span>
<span id="t429" class="t" style="transform:scaleX(0.9836);transform-origin:0 50%;left:439.15px;top:476.66px;font-size:9.8px;color:#000;-webkit-text-stroke:0.07px;">Sm: Về sớm; </span>
<span id="t430" class="t" style="transform:scaleX(0.9898);transform-origin:0 50%;left:497.95px;top:476.66px;font-size:9.8px;color:#000;-webkit-text-stroke:0.07px;">KR: Chỉ có giờ chấm công vào; </span>
<span id="t431" class="t" style="transform:scaleX(1.0022);transform-origin:0 50%;left:634.75px;top:476.66px;font-size:9.8px;color:#000;-webkit-text-stroke:0.07px;">KV: Chỉ có giờ chấm công ra; </span>
<span id="t432" class="t" style="transform:scaleX(0.9548);transform-origin:0 50%;left:765.25px;top:476.66px;font-size:9.8px;color:#000;-webkit-text-stroke:0.07px;">+: Tăng ca; </span>
<span id="t433" class="t" style="transform:scaleX(1.0022);transform-origin:0 50%;left:814.75px;top:476.66px;font-size:9.8px;color:#000;-webkit-text-stroke:0.07px;">X: Chấm công đúng giờ</span>
<div style="left:253.00px;top:490.70px;width:447.00px;height:14.00px;background:#fff;"></div>
<span id="t434" class="t" style="transform:scaleX(1.0270);transform-origin:0 50%;left:255.15px;top:491.66px;font-size:9.8px;color:#000;-webkit-text-stroke:0.07px;">Ngoài ra còn ký hiệu ghép của các kí hiệu đơn. </span>
<span id="t435" class="t" style="transform:scaleX(1.0031);transform-origin:0 50%;left:468.15px;top:491.66px;font-size:9.8px;color:#000;-webkit-text-stroke:0.07px;">Ví dụ: X+ là chấm công đúng giờ và có tăng ca</span>
<div style="left:19.90px;top:234.70px;width:1458.10px;height:1.00px;background:#101010;"></div>
<div style="left:19.90px;top:264.70px;width:1458.10px;height:1.00px;background:#101010;"></div>
<div style="left:19.90px;top:279.70px;width:1458.10px;height:1.00px;background:#101010;"></div>
<div style="left:19.90px;top:309.70px;width:1458.10px;height:1.00px;background:#101010;"></div>
<div style="left:19.90px;top:339.70px;width:1458.10px;height:1.00px;background:#101010;"></div>
<div style="left:19.90px;top:369.70px;width:1458.10px;height:1.00px;background:#101010;"></div>
<div style="left:19.90px;top:399.70px;width:1458.10px;height:1.00px;background:#101010;"></div>
<div style="left:220.00px;top:249.70px;width:995.00px;height:1.00px;background:#101010;"></div>
<div style="left:1246.00px;top:249.70px;width:232.00px;height:1.00px;background:#101010;"></div>
<div style="left:19.90px;top:234.70px;width:1.00px;height:166.00px;background:#101010;"></div>
<div style="left:1477.00px;top:234.70px;width:1.00px;height:166.00px;background:#101010;"></div>
<div style="left:46.00px;top:279.70px;width:1.00px;height:121.00px;background:#101010;"></div>
<div style="left:99.00px;top:279.70px;width:1.00px;height:121.00px;background:#101010;"></div>
<div style="left:203.80px;top:279.70px;width:1.00px;height:121.00px;background:#101010;"></div>
<div style="left:220.00px;top:279.70px;width:1.00px;height:121.00px;background:#101010;"></div>
<div style="left:252.00px;top:279.70px;width:1.00px;height:121.00px;background:#101010;"></div>
<div style="left:284.00px;top:279.70px;width:1.00px;height:121.00px;background:#101010;"></div>
<div style="left:316.00px;top:279.70px;width:1.00px;height:121.00px;background:#101010;"></div>
<div style="left:348.00px;top:279.70px;width:1.00px;height:121.00px;background:#101010;"></div>
<div style="left:380.00px;top:279.70px;width:1.00px;height:121.00px;background:#101010;"></div>
<div style="left:412.00px;top:279.70px;width:1.00px;height:121.00px;background:#101010;"></div>
<div style="left:444.00px;top:279.70px;width:1.00px;height:121.00px;background:#101010;"></div>
<div style="left:476.00px;top:279.70px;width:1.00px;height:121.00px;background:#101010;"></div>
<div style="left:508.00px;top:279.70px;width:1.00px;height:121.00px;background:#101010;"></div>
<div style="left:540.00px;top:279.70px;width:1.00px;height:121.00px;background:#101010;"></div>
<div style="left:572.00px;top:279.70px;width:1.00px;height:121.00px;background:#101010;"></div>
<div style="left:604.00px;top:279.70px;width:1.00px;height:121.00px;background:#101010;"></div>
<div style="left:636.00px;top:279.70px;width:1.00px;height:121.00px;background:#101010;"></div>
<div style="left:668.00px;top:279.70px;width:1.00px;height:121.00px;background:#101010;"></div>
<div style="left:700.00px;top:279.70px;width:1.00px;height:121.00px;background:#101010;"></div>
<div style="left:732.00px;top:279.70px;width:1.00px;height:121.00px;background:#101010;"></div>
<div style="left:774.00px;top:279.70px;width:1.00px;height:121.00px;background:#101010;"></div>
<div style="left:816.00px;top:279.70px;width:1.00px;height:121.00px;background:#101010;"></div>
<div style="left:858.00px;top:279.70px;width:1.00px;height:121.00px;background:#101010;"></div>
<div style="left:900.00px;top:279.70px;width:1.00px;height:121.00px;background:#101010;"></div>
<div style="left:942.00px;top:279.70px;width:1.00px;height:121.00px;background:#101010;"></div>
<div style="left:984.00px;top:279.70px;width:1.00px;height:121.00px;background:#101010;"></div>
<div style="left:1010.00px;top:279.70px;width:1.00px;height:121.00px;background:#101010;"></div>
<div style="left:1036.00px;top:279.70px;width:1.00px;height:121.00px;background:#101010;"></div>
<div style="left:1062.00px;top:279.70px;width:1.00px;height:121.00px;background:#101010;"></div>
<div style="left:1088.00px;top:279.70px;width:1.00px;height:121.00px;background:#101010;"></div>
<div style="left:1130.00px;top:279.70px;width:1.00px;height:121.00px;background:#101010;"></div>
<div style="left:1172.00px;top:279.70px;width:1.00px;height:121.00px;background:#101010;"></div>
<div style="left:1214.00px;top:279.70px;width:1.00px;height:121.00px;background:#101010;"></div>
<div style="left:1246.00px;top:279.70px;width:1.00px;height:121.00px;background:#101010;"></div>
<div style="left:1267.00px;top:279.70px;width:1.00px;height:121.00px;background:#101010;"></div>
<div style="left:1288.00px;top:279.70px;width:1.00px;height:121.00px;background:#101010;"></div>
<div style="left:1309.00px;top:279.70px;width:1.00px;height:121.00px;background:#101010;"></div>
<div style="left:1330.00px;top:279.70px;width:1.00px;height:121.00px;background:#101010;"></div>
<div style="left:1351.00px;top:279.70px;width:1.00px;height:121.00px;background:#101010;"></div>
<div style="left:1372.00px;top:279.70px;width:1.00px;height:121.00px;background:#101010;"></div>
<div style="left:1393.00px;top:279.70px;width:1.00px;height:121.00px;background:#101010;"></div>
<div style="left:1414.00px;top:279.70px;width:1.00px;height:121.00px;background:#101010;"></div>
<div style="left:1435.00px;top:279.70px;width:1.00px;height:121.00px;background:#101010;"></div>
<div style="left:1456.00px;top:279.70px;width:1.00px;height:121.00px;background:#101010;"></div>
<div style="left:46.00px;top:234.70px;width:1.00px;height:31.00px;background:#101010;"></div>
<div style="left:99.00px;top:234.70px;width:1.00px;height:31.00px;background:#101010;"></div>
<div style="left:203.80px;top:234.70px;width:1.00px;height:31.00px;background:#101010;"></div>
<div style="left:220.00px;top:234.70px;width:1.00px;height:31.00px;background:#101010;"></div>
<div style="left:252.00px;top:234.70px;width:1.00px;height:31.00px;background:#101010;"></div>
<div style="left:284.00px;top:234.70px;width:1.00px;height:31.00px;background:#101010;"></div>
<div style="left:316.00px;top:234.70px;width:1.00px;height:31.00px;background:#101010;"></div>
<div style="left:348.00px;top:234.70px;width:1.00px;height:31.00px;background:#101010;"></div>
<div style="left:380.00px;top:234.70px;width:1.00px;height:31.00px;background:#101010;"></div>
<div style="left:412.00px;top:234.70px;width:1.00px;height:31.00px;background:#101010;"></div>
<div style="left:444.00px;top:234.70px;width:1.00px;height:31.00px;background:#101010;"></div>
<div style="left:476.00px;top:234.70px;width:1.00px;height:31.00px;background:#101010;"></div>
<div style="left:508.00px;top:234.70px;width:1.00px;height:31.00px;background:#101010;"></div>
<div style="left:540.00px;top:234.70px;width:1.00px;height:31.00px;background:#101010;"></div>
<div style="left:572.00px;top:234.70px;width:1.00px;height:31.00px;background:#101010;"></div>
<div style="left:604.00px;top:234.70px;width:1.00px;height:31.00px;background:#101010;"></div>
<div style="left:636.00px;top:234.70px;width:1.00px;height:31.00px;background:#101010;"></div>
<div style="left:668.00px;top:234.70px;width:1.00px;height:31.00px;background:#101010;"></div>
<div style="left:700.00px;top:234.70px;width:1.00px;height:31.00px;background:#101010;"></div>
<div style="left:732.00px;top:234.70px;width:1.00px;height:31.00px;background:#101010;"></div>
<div style="left:774.00px;top:249.70px;width:1.00px;height:16.00px;background:#101010;"></div>
<div style="left:816.00px;top:249.70px;width:1.00px;height:16.00px;background:#101010;"></div>
<div style="left:858.00px;top:234.70px;width:1.00px;height:31.00px;background:#101010;"></div>
<div style="left:900.00px;top:249.70px;width:1.00px;height:16.00px;background:#101010;"></div>
<div style="left:942.00px;top:249.70px;width:1.00px;height:16.00px;background:#101010;"></div>
<div style="left:984.00px;top:234.70px;width:1.00px;height:31.00px;background:#101010;"></div>
<div style="left:1010.00px;top:249.70px;width:1.00px;height:16.00px;background:#101010;"></div>
<div style="left:1036.00px;top:234.70px;width:1.00px;height:31.00px;background:#101010;"></div>
<div style="left:1062.00px;top:249.70px;width:1.00px;height:16.00px;background:#101010;"></div>
<div style="left:1088.00px;top:234.70px;width:1.00px;height:31.00px;background:#101010;"></div>
<div style="left:1130.00px;top:249.70px;width:1.00px;height:16.00px;background:#101010;"></div>
<div style="left:1172.00px;top:249.70px;width:1.00px;height:16.00px;background:#101010;"></div>
<div style="left:1214.00px;top:234.70px;width:1.00px;height:31.00px;background:#101010;"></div>
<div style="left:1246.00px;top:234.70px;width:1.00px;height:31.00px;background:#101010;"></div>
<div style="left:1267.00px;top:249.70px;width:1.00px;height:16.00px;background:#101010;"></div>
<div style="left:1288.00px;top:249.70px;width:1.00px;height:16.00px;background:#101010;"></div>
<div style="left:1309.00px;top:249.70px;width:1.00px;height:16.00px;background:#101010;"></div>
<div style="left:1330.00px;top:249.70px;width:1.00px;height:16.00px;background:#101010;"></div>
<div style="left:1351.00px;top:249.70px;width:1.00px;height:16.00px;background:#101010;"></div>
<div style="left:1372.00px;top:249.70px;width:1.00px;height:16.00px;background:#101010;"></div>
<div style="left:1393.00px;top:249.70px;width:1.00px;height:16.00px;background:#101010;"></div>
<div style="left:1414.00px;top:249.70px;width:1.00px;height:16.00px;background:#101010;"></div>
<div style="left:1435.00px;top:249.70px;width:1.00px;height:16.00px;background:#101010;"></div>
<div style="left:1456.00px;top:249.70px;width:1.00px;height:16.00px;background:#101010;"></div>
<div style="left:204.30px;top:294.70px;width:496.20px;height:1px;background:repeating-linear-gradient(90deg,#101010 0,#101010 2px,transparent 2px,transparent 3.3px);"></div>
<div style="left:700.00px;top:294.70px;width:33.00px;height:1.00px;background:#101010;"></div>
<div style="left:204.30px;top:324.70px;width:496.20px;height:1px;background:repeating-linear-gradient(90deg,#101010 0,#101010 2px,transparent 2px,transparent 3.3px);"></div>
<div style="left:700.00px;top:324.70px;width:33.00px;height:1.00px;background:#101010;"></div>
<div style="left:204.30px;top:354.70px;width:496.20px;height:1px;background:repeating-linear-gradient(90deg,#101010 0,#101010 2px,transparent 2px,transparent 3.3px);"></div>
<div style="left:700.00px;top:354.70px;width:33.00px;height:1.00px;background:#101010;"></div>
<div style="left:204.30px;top:384.70px;width:496.20px;height:1px;background:repeating-linear-gradient(90deg,#101010 0,#101010 2px,transparent 2px,transparent 3.3px);"></div>
<div style="left:700.00px;top:384.70px;width:33.00px;height:1.00px;background:#101010;"></div>
</div></body></html>
